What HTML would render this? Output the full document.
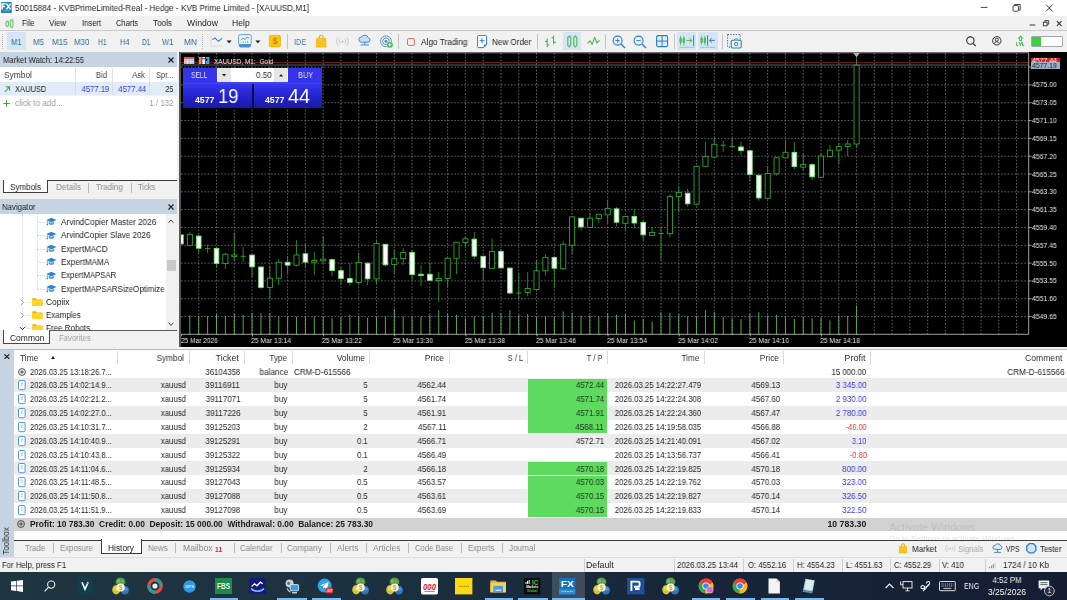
<!DOCTYPE html>
<html><head><meta charset="utf-8"><title>MetaTrader 5</title>
<style>
html,body{margin:0;padding:0;}
body{width:1067px;height:600px;overflow:hidden;position:relative;background:#f0f0f0;font-family:"Liberation Sans",sans-serif;}
body>div,body>span,body>svg{position:absolute;}
.t{position:absolute;white-space:pre;display:block;will-change:transform;line-height:14px;height:14px;font-family:"Liberation Sans",sans-serif;}
svg{overflow:visible;}
</style></head><body>
<div style="left:0.00px;top:0.00px;width:1067.00px;height:16.00px;background:#ffffff;"></div>
<svg style="left:1.30px;top:2.10px;" width="10.7" height="10.7" viewBox="0 0 10.7 10.7"><rect x="0" y="0" width="10.7" height="10.7" rx="0.8" fill="#1f8ac6"/><rect x="0" y="8.6" width="10.7" height="2.1" fill="#1a74ab"/><path d="M1.2 7.4v-5.6h3.4M1.2 4.5h2.8" stroke="#fff" stroke-width="1.5" fill="none"/><path d="M5.4 1.6l4.2 5.8M9.6 1.6l-4.2 5.8" stroke="#fff" stroke-width="1.5" fill="none"/><path d="M1.6 8.9h7.6" stroke="#9fd3f0" stroke-width="0.6"/></svg>
<span class="t" style="top:1.30px;font-size:8.4px;color:#222;left:15.30px;transform-origin:0 50%;transform:scaleX(0.9762);">50015884 - KVBPrimeLimited-Real - Hedge - KVB Prime Limited - [XAUUSD,M1]</span>
<svg style="left:975.00px;top:0.00px;" width="92" height="16" viewBox="0 0 92 16"><path d="M5.7 7.4h6.8" stroke="#333" stroke-width="0.9"/><rect x="38" y="5.6" width="5.6" height="5.6" rx="0.8" fill="none" stroke="#333" stroke-width="0.9"/><path d="M39.6 5.6v-1.1h5.6v5.6h-1.4" fill="none" stroke="#333" stroke-width="0.9"/><path d="M71 4.7l6.6 6.6M77.6 4.7l-6.6 6.6" stroke="#333" stroke-width="0.9"/></svg>
<div style="left:0.00px;top:16.00px;width:1067.00px;height:14.40px;background:#f1f1f1;"></div>
<div style="left:0.00px;top:30.20px;width:1067.00px;height:0.80px;background:#c9c9c9;"></div>
<svg style="left:4.50px;top:18.60px;" width="10" height="9.5" viewBox="0 0 10 9.5"><rect x="1" y="2.4" width="2.6" height="4.8" rx="0.5" fill="#d2f2d2" stroke="#55b555" stroke-width="0.85"/><path d="M2.3 1.6v0.8M2.3 7.2v0.9" stroke="#55b555" stroke-width="0.8"/><rect x="5.2" y="1" width="2.8" height="7.2" rx="0.5" fill="#d2f2d2" stroke="#55b555" stroke-width="0.85"/><path d="M6.6 0.2v0.8M6.6 8.2v0.9" stroke="#55b555" stroke-width="0.8"/></svg>
<span class="t" style="top:16.00px;font-size:8.4px;color:#222;left:21.60px;transform-origin:0 50%;transform:scaleX(0.9333);">File</span>
<span class="t" style="top:16.00px;font-size:8.4px;color:#222;left:49.20px;transform-origin:0 50%;transform:scaleX(0.9492);">View</span>
<span class="t" style="top:16.00px;font-size:8.4px;color:#222;left:81.50px;transform-origin:0 50%;transform:scaleX(0.9163);">Insert</span>
<span class="t" style="top:16.00px;font-size:8.4px;color:#222;left:115.90px;transform-origin:0 50%;transform:scaleX(0.8958);">Charts</span>
<span class="t" style="top:16.00px;font-size:8.4px;color:#222;left:153.00px;transform-origin:0 50%;transform:scaleX(0.9712);">Tools</span>
<span class="t" style="top:16.00px;font-size:8.4px;color:#222;left:187.00px;transform-origin:0 50%;transform:scaleX(1.0404);">Window</span>
<span class="t" style="top:16.00px;font-size:8.4px;color:#222;left:231.80px;transform-origin:0 50%;transform:scaleX(1.0270);">Help</span>
<svg style="left:1026.00px;top:16.00px;" width="41" height="14" viewBox="0 0 41 14"><path d="M3.7 9h5.6" stroke="#333" stroke-width="1"/><rect x="17.3" y="6.2" width="3.8" height="3.6" fill="none" stroke="#333" stroke-width="0.9"/><path d="M18.8 6.2v-1.6h3.9v3.6h-1.6" fill="none" stroke="#333" stroke-width="0.9"/><path d="M30.9 5.2l4.6 4.6M35.5 5.2l-4.6 4.6" stroke="#333" stroke-width="1.1"/></svg>
<div style="left:0.00px;top:31.00px;width:1067.00px;height:20.40px;background:#f1f1f1;"></div>
<div style="left:1.60px;top:34.00px;width:0.80px;height:0.90px;background:#b5b5b5;"></div>
<div style="left:1.60px;top:36.00px;width:0.80px;height:0.90px;background:#b5b5b5;"></div>
<div style="left:1.60px;top:38.00px;width:0.80px;height:0.90px;background:#b5b5b5;"></div>
<div style="left:1.60px;top:40.00px;width:0.80px;height:0.90px;background:#b5b5b5;"></div>
<div style="left:1.60px;top:42.00px;width:0.80px;height:0.90px;background:#b5b5b5;"></div>
<div style="left:1.60px;top:44.00px;width:0.80px;height:0.90px;background:#b5b5b5;"></div>
<div style="left:1.60px;top:46.00px;width:0.80px;height:0.90px;background:#b5b5b5;"></div>
<div style="left:1.60px;top:48.00px;width:0.80px;height:0.90px;background:#b5b5b5;"></div>
<div style="left:202.00px;top:34.00px;width:0.80px;height:0.90px;background:#b5b5b5;"></div>
<div style="left:202.00px;top:36.00px;width:0.80px;height:0.90px;background:#b5b5b5;"></div>
<div style="left:202.00px;top:38.00px;width:0.80px;height:0.90px;background:#b5b5b5;"></div>
<div style="left:202.00px;top:40.00px;width:0.80px;height:0.90px;background:#b5b5b5;"></div>
<div style="left:202.00px;top:42.00px;width:0.80px;height:0.90px;background:#b5b5b5;"></div>
<div style="left:202.00px;top:44.00px;width:0.80px;height:0.90px;background:#b5b5b5;"></div>
<div style="left:202.00px;top:46.00px;width:0.80px;height:0.90px;background:#b5b5b5;"></div>
<div style="left:202.00px;top:48.00px;width:0.80px;height:0.90px;background:#b5b5b5;"></div>
<div style="left:7.00px;top:31.80px;width:18.60px;height:18.60px;background:#d5e5f4;"></div>
<span class="t" style="top:34.90px;font-size:8.4px;color:#2f6f9f;left:11.00px;transform-origin:0 50%;transform:scaleX(0.9106);">M1</span>
<span class="t" style="top:34.90px;font-size:8.4px;color:#2f6f9f;left:32.50px;transform-origin:0 50%;transform:scaleX(0.9450);">M5</span>
<span class="t" style="top:34.90px;font-size:8.4px;color:#2f6f9f;left:52.00px;transform-origin:0 50%;transform:scaleX(0.9511);">M15</span>
<span class="t" style="top:34.90px;font-size:8.4px;color:#2f6f9f;left:73.70px;transform-origin:0 50%;transform:scaleX(0.9388);">M30</span>
<span class="t" style="top:34.90px;font-size:8.4px;color:#2f6f9f;left:98.30px;transform-origin:0 50%;transform:scaleX(0.8117);">H1</span>
<span class="t" style="top:34.90px;font-size:8.4px;color:#2f6f9f;left:120.00px;transform-origin:0 50%;transform:scaleX(0.8863);">H4</span>
<span class="t" style="top:34.90px;font-size:8.4px;color:#2f6f9f;left:141.60px;transform-origin:0 50%;transform:scaleX(0.7837);">D1</span>
<span class="t" style="top:34.90px;font-size:8.4px;color:#2f6f9f;left:161.90px;transform-origin:0 50%;transform:scaleX(0.8995);">W1</span>
<span class="t" style="top:34.90px;font-size:8.4px;color:#2f6f9f;left:183.50px;transform-origin:0 50%;transform:scaleX(0.9746);">MN</span>
<div style="left:287.10px;top:33.50px;width:0.90px;height:15.50px;background:#c4c4c4;"></div>
<div style="left:398.20px;top:33.50px;width:0.90px;height:15.50px;background:#c4c4c4;"></div>
<div style="left:537.40px;top:33.50px;width:0.90px;height:15.50px;background:#c4c4c4;"></div>
<div style="left:604.80px;top:33.50px;width:0.90px;height:15.50px;background:#c4c4c4;"></div>
<div style="left:673.60px;top:33.50px;width:0.90px;height:15.50px;background:#c4c4c4;"></div>
<div style="left:721.80px;top:33.50px;width:0.90px;height:15.50px;background:#c4c4c4;"></div>
<svg style="left:210.00px;top:34.00px;" width="24" height="15" viewBox="0 0 24 15"><path d="M1 1.4v10.8h11.4" fill="none" stroke="#e2d2d2" stroke-width="0.8"/><path d="M2.4 5.6l2.6-1.6 3.4 3.4 3.8-3" fill="none" stroke="#2d7dc0" stroke-width="1.05"/><path d="M16.6 6.4h5l-2.5 2.9z" fill="#1a1a1a"/></svg>
<svg style="left:238.20px;top:34.00px;" width="24" height="16" viewBox="0 0 24 16"><rect x="0.6" y="0.6" width="12.6" height="10.6" rx="1.8" fill="#eef5fb" stroke="#6aa2d4" stroke-width="1"/><path d="M0.9 10h12v1.6a2 2 0 0 1-2 2h-8a2 2 0 0 1-2-2z" fill="#4a90cc"/><path d="M2.6 6l2.2-1.8 2 1.2 2.2-2.2 2.2 0.9" fill="none" stroke="#3b86c4" stroke-width="0.9"/><path d="M3 9v-1.1M5.2 9v-1.8M7.4 9v-1.3M9.6 9v-2.2" stroke="#6fbf6f" stroke-width="0.9"/><path d="M17.4 6.4h5l-2.5 2.9z" fill="#1a1a1a"/></svg>
<svg style="left:268.50px;top:35.00px;" width="12" height="12.4" viewBox="0 0 12 12.4"><rect x="0.3" y="0.3" width="11.2" height="11.6" rx="1.6" fill="#fbc515" stroke="#e5a800" stroke-width="0.6"/><text x="5.9" y="9.3" font-size="9" text-anchor="middle" fill="#c28608" font-family="Liberation Sans" font-weight="bold">$</text></svg>
<span class="t" style="top:34.60px;font-size:8.4px;color:#3b7cb2;left:293.60px;transform-origin:0 50%;transform:scaleX(0.8734);">IDE</span>
<svg style="left:315.80px;top:33.90px;" width="10.5" height="14" viewBox="0 0 10.5 14"><path d="M3.2 4.2v-1.2a2 2 0 0 1 4 0v1.2" fill="none" stroke="#e0a200" stroke-width="1"/><path d="M0.6 4.2h9.2l0.4 8.9h-10z" fill="#fbc21a" stroke="#e5a800" stroke-width="0.5"/></svg>
<svg style="left:336.30px;top:35.90px;" width="13" height="11" viewBox="0 0 13 11"><circle cx="6.5" cy="5.5" r="1.1" fill="#bdbdbd"/><path d="M4.3 3.2a3.2 3.2 0 0 0 0 4.6M8.7 3.2a3.2 3.2 0 0 1 0 4.6M2.4 1.4a5.8 5.8 0 0 0 0 8.2M10.6 1.4a5.8 5.8 0 0 1 0 8.2" fill="none" stroke="#c4c4c4" stroke-width="0.9"/></svg>
<svg style="left:357.80px;top:35.20px;" width="14" height="12" viewBox="0 0 14 12"><path d="M3.4 7.2a2.6 2.6 0 0 1 0.2-5.2a3.6 3.6 0 0 1 6.6 0.7a2.3 2.3 0 0 1-0.1 4.5z" fill="#c6e0f6" stroke="#3b86c4" stroke-width="0.95"/><path d="M6.7 7.4v2.2M2.6 9.9h8.4" stroke="#3b86c4" stroke-width="0.95"/></svg>
<svg style="left:379.80px;top:35.00px;" width="14" height="14" viewBox="0 0 14 14"><circle cx="6" cy="6.3" r="5.4" fill="none" stroke="#4d8fc4" stroke-width="0.9"/><circle cx="6" cy="6.3" r="3.4" fill="none" stroke="#4d8fc4" stroke-width="0.9"/><circle cx="6" cy="6.3" r="1.5" fill="#4d8fc4"/><circle cx="9.8" cy="9.8" r="3.3" fill="#35b04a" stroke="#f1f1f1" stroke-width="0.6"/><path d="M8 9.8h3.6M9.8 8v3.6" stroke="#fff" stroke-width="0.9"/></svg>
<svg style="left:407.00px;top:37.70px;" width="9" height="9" viewBox="0 0 9 9"><rect x="0.5" y="0.5" width="6.9" height="6.9" rx="1.3" fill="#fdeeee" stroke="#e06a6a" stroke-width="1"/></svg>
<span class="t" style="top:34.90px;font-size:8.4px;color:#222;left:420.50px;transform-origin:0 50%;transform:scaleX(0.9887);">Algo Trading</span>
<svg style="left:477.20px;top:35.00px;" width="11" height="13.5" viewBox="0 0 11 13.5"><path d="M1.6 0.6h7a1 1 0 0 1 1 1v8l-2.8 3h-5.2a1 1 0 0 1-1-1v-10a1 1 0 0 1 1-1z" fill="#fff" stroke="#2f7fc2" stroke-width="1"/><path d="M5 3.2v5M2.6 5.7h4.8" stroke="#2f7fc2" stroke-width="1"/><path d="M9.6 9.6l-2.8 3v-3z" fill="#2f7fc2"/></svg>
<span class="t" style="top:34.90px;font-size:8.4px;color:#222;left:492.30px;transform-origin:0 50%;transform:scaleX(0.9679);">New Order</span>
<svg style="left:544.00px;top:35.00px;" width="13" height="13" viewBox="0 0 13 13"><path d="M3.2 3.2v9M1 6.4h2.2M3.2 10h2.2" fill="none" stroke="#48b757" stroke-width="1.1"/><path d="M9.6 0.6v8.6M7.6 2.6h2M9.6 7.4h2.2" fill="none" stroke="#48b757" stroke-width="1.1"/></svg>
<div style="left:562.70px;top:31.80px;width:18.70px;height:18.60px;background:#d5e5f4;"></div>
<svg style="left:566.60px;top:35.00px;" width="11" height="13" viewBox="0 0 11 13"><rect x="0.8" y="1.6" width="3" height="9.6" rx="1.2" fill="none" stroke="#48b757" stroke-width="1.1"/><rect x="6.8" y="1.6" width="3" height="9.6" rx="1.2" fill="none" stroke="#48b757" stroke-width="1.1"/><path d="M2.3 0.4v1.2M2.3 11.2v1.4M8.3 0.4v1.2M8.3 11.2v1.4" stroke="#48b757" stroke-width="1"/></svg>
<svg style="left:587.40px;top:36.00px;" width="13" height="11" viewBox="0 0 13 11"><path d="M0.5 7.2l2.6-2.4 2 3.6 2.6-7 2.2 5.6 2.6-2.6" fill="none" stroke="#48b757" stroke-width="1.15" stroke-linejoin="round"/></svg>
<svg style="left:611.50px;top:34.50px;" width="14" height="14" viewBox="0 0 14 14"><circle cx="5.6" cy="5.6" r="4.5" fill="#eaf3fb" stroke="#2f7fc2" stroke-width="1.1"/><path d="M9 9l4 4" stroke="#2f7fc2" stroke-width="1.4"/><path d="M3.4 5.6h4.4M5.6 3.4v4.4" stroke="#2f7fc2" stroke-width="1"/></svg>
<svg style="left:633.00px;top:34.50px;" width="14" height="14" viewBox="0 0 14 14"><circle cx="5.6" cy="5.6" r="4.5" fill="#eaf3fb" stroke="#2f7fc2" stroke-width="1.1"/><path d="M9 9l4 4" stroke="#2f7fc2" stroke-width="1.4"/><path d="M3.4 5.6h4.4" stroke="#2f7fc2" stroke-width="1"/></svg>
<svg style="left:655.80px;top:35.30px;" width="12.4" height="12.4" viewBox="0 0 12.4 12.4"><rect x="0.6" y="0.6" width="11" height="11" rx="1.4" fill="#dcecf9" stroke="#2f7fc2" stroke-width="1.1"/><path d="M6.1 0.6v11M0.6 6.1h11" stroke="#2f7fc2" stroke-width="1"/></svg>
<div style="left:676.50px;top:31.80px;width:19.50px;height:18.60px;background:#d5e5f4;"></div>
<svg style="left:678.50px;top:35.20px;" width="16" height="13" viewBox="0 0 16 13"><rect x="0.5" y="2.8" width="2.2" height="5.2" rx="0.9" fill="#48b757"/><path d="M1.6 0.8v9.4" stroke="#48b757" stroke-width="0.8"/><rect x="3.7" y="2.8" width="2.2" height="5.2" rx="0.9" fill="#48b757"/><path d="M4.8 0.8v9.4" stroke="#48b757" stroke-width="0.8"/><path d="M7.4 5.4h5.4M10.6 3.2l2.3 2.2-2.3 2.2" fill="none" stroke="#48b757" stroke-width="1"/><path d="M14.6 0.4v10.4" stroke="#2f7fc2" stroke-width="1"/><path d="M0.4 12.3h14.8" stroke="#8db4d6" stroke-width="0.8"/></svg>
<div style="left:698.30px;top:31.80px;width:19.50px;height:18.60px;background:#d5e5f4;"></div>
<svg style="left:700.30px;top:35.20px;" width="16" height="13" viewBox="0 0 16 13"><rect x="0.5" y="2.8" width="2.2" height="5.2" rx="0.9" fill="#48b757"/><path d="M1.6 0.8v9.4" stroke="#48b757" stroke-width="0.8"/><rect x="3.7" y="2.8" width="2.2" height="5.2" rx="0.9" fill="#48b757"/><path d="M4.8 0.8v9.4" stroke="#48b757" stroke-width="0.8"/><path d="M7.6 0.4v10.4" stroke="#2f7fc2" stroke-width="1"/><path d="M9.6 5.4h5.2M11.8 3.2l-2.3 2.2 2.3 2.2" fill="none" stroke="#2f7fc2" stroke-width="1"/><path d="M0.4 12.3h14.8" stroke="#8db4d6" stroke-width="0.8"/></svg>
<svg style="left:726.60px;top:34.30px;" width="14.5" height="14.5" viewBox="0 0 14.5 14.5"><rect x="0.6" y="0.6" width="12.6" height="12.4" fill="none" stroke="#3a6f9f" stroke-width="1" stroke-dasharray="1.4 1.3"/><rect x="4.2" y="6.2" width="10" height="7.8" rx="1.2" fill="#f1f1f1" stroke="#2f7fc2" stroke-width="1.1"/><path d="M7.2 6.2l0.8-1.3h2.4l0.8 1.3" fill="#f1f1f1" stroke="#2f7fc2" stroke-width="0.9"/><circle cx="9.2" cy="10.1" r="1.7" fill="none" stroke="#2f7fc2" stroke-width="1"/></svg>
<svg style="left:966.00px;top:36.00px;" width="11" height="11" viewBox="0 0 11 11"><circle cx="4.4" cy="4.6" r="3.7" fill="none" stroke="#333" stroke-width="1.1"/><path d="M7.1 7.4l2.6 2.7" stroke="#333" stroke-width="1.3"/></svg>
<svg style="left:991.50px;top:36.00px;" width="10" height="10" viewBox="0 0 10 10"><circle cx="4.8" cy="4.8" r="4.2" fill="none" stroke="#333" stroke-width="1"/><circle cx="4.8" cy="3.7" r="1.5" fill="none" stroke="#333" stroke-width="0.9"/><path d="M2.1 7.8a2.8 2.8 0 0 1 5.4 0" fill="none" stroke="#333" stroke-width="0.9"/></svg>
<svg style="left:1016.00px;top:35.00px;" width="10" height="12" viewBox="0 0 10 12"><path d="M4.6 0.4l3 3.2h-1.7v2.6h-2.6v-2.6h-1.7z" fill="#3cb34a"/><path d="M4.6 1.8l1.2 1.4h-0.7v2h-1v-2h-0.7z" fill="#d9f3dc"/></svg>
<svg style="left:1016.40px;top:42.20px;" width="9" height="4.2" viewBox="0 0 9 4.2"><path d="M0.6 0.2v3.4h1.7M3.2 0.2l1.2 3.4 1.2-3.4M6.5 0.2v3.4h1.7" fill="none" stroke="#3cb34a" stroke-width="0.95"/></svg>
<div style="left:1031.00px;top:36.20px;width:31.80px;height:10.40px;background:#ffffff;border:0.9px solid #a8a8a8;box-sizing:border-box;border-radius:1px;"></div>
<div style="left:1032.00px;top:37.30px;width:9.00px;height:8.30px;background:#3fcf45;"></div>
<div style="left:0.00px;top:51.40px;width:180.00px;height:296.00px;background:#f1f1f1;"></div>
<div style="left:0.00px;top:51.80px;width:176.80px;height:14.80px;background:#c6d3e3;"></div>
<span class="t" style="top:52.60px;font-size:8.4px;color:#222;left:2.60px;transform-origin:0 50%;transform:scaleX(0.9141);">Market Watch: 14:22:55</span>
<svg style="left:168.00px;top:56.60px;" width="6" height="6" viewBox="0 0 6 6"><path d="M0.5 0.5l5 5M5.5 0.5l-5 5" stroke="#222" stroke-width="1.2"/></svg>
<div style="left:0.00px;top:66.60px;width:176.80px;height:114.00px;background:#ffffff;"></div>
<span class="t" style="top:67.90px;font-size:8.4px;color:#444;left:4.30px;transform-origin:0 50%;transform:scaleX(0.9915);">Symbol</span>
<span class="t" style="top:67.90px;font-size:8.4px;color:#444;right:959.80px;transform-origin:100% 50%;transform:scaleX(0.9332);">Bid</span>
<span class="t" style="top:67.90px;font-size:8.4px;color:#444;right:922.20px;transform-origin:100% 50%;transform:scaleX(0.9020);">Ask</span>
<span class="t" style="top:67.90px;font-size:8.4px;color:#444;left:155.70px;transform-origin:0 50%;transform:scaleX(0.8843);">Spr...</span>
<div style="left:74.50px;top:67.50px;width:0.90px;height:28.00px;background:#e3e3e3;"></div>
<div style="left:111.70px;top:67.50px;width:0.90px;height:28.00px;background:#e3e3e3;"></div>
<div style="left:149.10px;top:67.50px;width:0.90px;height:28.00px;background:#e3e3e3;"></div>
<div style="left:0.00px;top:82.10px;width:176.80px;height:13.30px;background:#e1ecf8;"></div>
<div style="left:0.00px;top:95.30px;width:176.80px;height:0.80px;background:#ecf2f8;"></div>
<div style="left:74.50px;top:82.10px;width:0.90px;height:13.30px;background:#d3deea;"></div>
<div style="left:111.70px;top:82.10px;width:0.90px;height:13.30px;background:#d3deea;"></div>
<div style="left:149.10px;top:82.10px;width:0.90px;height:13.30px;background:#d3deea;"></div>
<svg style="left:3.60px;top:85.60px;" width="6.4" height="6.4" viewBox="0 0 6.4 6.4"><path d="M0.8 5.8l4.6-4.6M1.8 0.9h3.8v3.8" fill="none" stroke="#3aae4a" stroke-width="1.1"/></svg>
<span class="t" style="top:81.80px;font-size:8.4px;color:#222;left:15.20px;transform-origin:0 50%;transform:scaleX(0.8996);">XAUUSD</span>
<span class="t" style="top:81.80px;font-size:8.4px;color:#3b3bd0;right:957.90px;transform-origin:100% 50%;transform:scaleX(0.9148);">4577.19</span>
<span class="t" style="top:81.80px;font-size:8.4px;color:#3b3bd0;right:920.40px;transform-origin:100% 50%;transform:scaleX(0.9247);">4577.44</span>
<span class="t" style="top:81.80px;font-size:8.4px;color:#222;right:893.20px;transform-origin:100% 50%;transform:scaleX(0.8469);">25</span>
<svg style="left:3.10px;top:99.60px;" width="7" height="7" viewBox="0 0 7 7"><path d="M3.5 0.2v6.6M0.2 3.5h6.6" stroke="#3aae4a" stroke-width="1"/></svg>
<span class="t" style="top:96.10px;font-size:8.4px;color:#9a9a9a;left:15.20px;transform-origin:0 50%;transform:scaleX(0.9777);">click to add...</span>
<span class="t" style="top:96.10px;font-size:8.4px;color:#9a9a9a;right:892.90px;transform-origin:100% 50%;transform:scaleX(0.9522);">1 / 132</span>
<div style="left:0.00px;top:180.20px;width:176.80px;height:18.60px;background:#f1f1f1;"></div>
<div style="left:48.30px;top:180.00px;width:128.50px;height:0.90px;background:#3c3c3c;"></div>
<div style="left:3.10px;top:179.50px;width:45.20px;height:13.80px;background:#ffffff;border:0.9px solid #3c3c3c;border-top:none;box-sizing:border-box;"></div>
<span class="t" style="top:180.00px;font-size:8.4px;color:#222;left:10.00px;transform-origin:0 50%;transform:scaleX(0.9650);">Symbols</span>
<span class="t" style="top:180.00px;font-size:8.4px;color:#8c8c8c;left:56.00px;transform-origin:0 50%;transform:scaleX(0.9762);">Details</span>
<span class="t" style="top:180.00px;font-size:8.4px;color:#8c8c8c;left:96.20px;transform-origin:0 50%;transform:scaleX(0.9504);">Trading</span>
<span class="t" style="top:180.00px;font-size:8.4px;color:#8c8c8c;left:138.40px;transform-origin:0 50%;transform:scaleX(0.8994);">Ticks</span>
<div style="left:88.40px;top:182.60px;width:0.90px;height:10.20px;background:#b9b9b9;"></div>
<div style="left:131.00px;top:182.60px;width:0.90px;height:10.20px;background:#b9b9b9;"></div>
<div style="left:0.00px;top:199.00px;width:176.80px;height:14.80px;background:#c6d3e3;"></div>
<span class="t" style="top:199.80px;font-size:8.4px;color:#222;left:2.00px;transform-origin:0 50%;transform:scaleX(0.9290);">Navigator</span>
<svg style="left:168.00px;top:203.80px;" width="6" height="6" viewBox="0 0 6 6"><path d="M0.5 0.5l5 5M5.5 0.5l-5 5" stroke="#222" stroke-width="1.2"/></svg>
<div style="left:0.00px;top:213.80px;width:176.80px;height:116.40px;background:#ffffff;"></div>
<div style="left:22.3px;top:214px;width:0;height:114px;border-left:0.9px dotted #d6d6d6;"></div>
<div style="left:36.6px;top:214px;width:0;height:75px;border-left:0.9px dotted #d6d6d6;"></div>
<div style="left:37px;top:221.9px;width:8px;height:0;border-top:0.9px dotted #d6d6d6;"></div>
<svg style="left:45.60px;top:217.30px;" width="11" height="9" viewBox="0 0 11 9"><path d="M0.4 3.1l5-2.3 5 2.3-5 2.3z" fill="#2f86c8"/><path d="M2.6 4.6v2.5c1.6 1.2 4 1.2 5.6 0v-2.5l-2.8 1.3z" fill="#5aa5dc"/><path d="M1.3 3.6v3.6" stroke="#2f86c8" stroke-width="0.7"/><circle cx="1.3" cy="7.6" r="0.8" fill="#2f86c8"/></svg>
<span class="t" style="top:214.90px;font-size:8.4px;color:#222;left:60.80px;transform-origin:0 50%;transform:scaleX(0.9795);">ArvindCopier Master 2026</span>
<div style="left:37px;top:235.3px;width:8px;height:0;border-top:0.9px dotted #d6d6d6;"></div>
<svg style="left:45.60px;top:230.70px;" width="11" height="9" viewBox="0 0 11 9"><path d="M0.4 3.1l5-2.3 5 2.3-5 2.3z" fill="#2f86c8"/><path d="M2.6 4.6v2.5c1.6 1.2 4 1.2 5.6 0v-2.5l-2.8 1.3z" fill="#5aa5dc"/><path d="M1.3 3.6v3.6" stroke="#2f86c8" stroke-width="0.7"/><circle cx="1.3" cy="7.6" r="0.8" fill="#2f86c8"/></svg>
<span class="t" style="top:228.30px;font-size:8.4px;color:#222;left:60.80px;transform-origin:0 50%;transform:scaleX(0.9659);">ArvindCopier Slave 2026</span>
<div style="left:37px;top:248.8px;width:8px;height:0;border-top:0.9px dotted #d6d6d6;"></div>
<svg style="left:45.60px;top:244.20px;" width="11" height="9" viewBox="0 0 11 9"><path d="M0.4 3.1l5-2.3 5 2.3-5 2.3z" fill="#2f86c8"/><path d="M2.6 4.6v2.5c1.6 1.2 4 1.2 5.6 0v-2.5l-2.8 1.3z" fill="#5aa5dc"/><path d="M1.3 3.6v3.6" stroke="#2f86c8" stroke-width="0.7"/><circle cx="1.3" cy="7.6" r="0.8" fill="#2f86c8"/></svg>
<span class="t" style="top:241.80px;font-size:8.4px;color:#222;left:60.80px;transform-origin:0 50%;transform:scaleX(0.9535);">ExpertMACD</span>
<div style="left:37px;top:262.0px;width:8px;height:0;border-top:0.9px dotted #d6d6d6;"></div>
<svg style="left:45.60px;top:257.40px;" width="11" height="9" viewBox="0 0 11 9"><path d="M0.4 3.1l5-2.3 5 2.3-5 2.3z" fill="#2f86c8"/><path d="M2.6 4.6v2.5c1.6 1.2 4 1.2 5.6 0v-2.5l-2.8 1.3z" fill="#5aa5dc"/><path d="M1.3 3.6v3.6" stroke="#2f86c8" stroke-width="0.7"/><circle cx="1.3" cy="7.6" r="0.8" fill="#2f86c8"/></svg>
<span class="t" style="top:255.00px;font-size:8.4px;color:#222;left:60.80px;transform-origin:0 50%;transform:scaleX(0.9809);">ExpertMAMA</span>
<div style="left:37px;top:275.2px;width:8px;height:0;border-top:0.9px dotted #d6d6d6;"></div>
<svg style="left:45.60px;top:270.60px;" width="11" height="9" viewBox="0 0 11 9"><path d="M0.4 3.1l5-2.3 5 2.3-5 2.3z" fill="#2f86c8"/><path d="M2.6 4.6v2.5c1.6 1.2 4 1.2 5.6 0v-2.5l-2.8 1.3z" fill="#5aa5dc"/><path d="M1.3 3.6v3.6" stroke="#2f86c8" stroke-width="0.7"/><circle cx="1.3" cy="7.6" r="0.8" fill="#2f86c8"/></svg>
<span class="t" style="top:268.20px;font-size:8.4px;color:#222;left:60.80px;transform-origin:0 50%;transform:scaleX(0.9265);">ExpertMAPSAR</span>
<div style="left:37px;top:288.6px;width:8px;height:0;border-top:0.9px dotted #d6d6d6;"></div>
<svg style="left:45.60px;top:284.00px;" width="11" height="9" viewBox="0 0 11 9"><path d="M0.4 3.1l5-2.3 5 2.3-5 2.3z" fill="#2f86c8"/><path d="M2.6 4.6v2.5c1.6 1.2 4 1.2 5.6 0v-2.5l-2.8 1.3z" fill="#5aa5dc"/><path d="M1.3 3.6v3.6" stroke="#2f86c8" stroke-width="0.7"/><circle cx="1.3" cy="7.6" r="0.8" fill="#2f86c8"/></svg>
<span class="t" style="top:281.60px;font-size:8.4px;color:#222;left:60.80px;transform-origin:0 50%;transform:scaleX(0.9511);">ExpertMAPSARSizeOptimize</span>
<svg style="left:20.40px;top:298.50px;" width="5" height="7" viewBox="0 0 5 7"><path d="M0.8 0.6l2.8 2.8-2.8 2.8" fill="none" stroke="#999" stroke-width="0.9"/></svg>
<div style="left:27px;top:301.9px;width:4px;height:0;border-top:0.9px dotted #d6d6d6;"></div>
<svg style="left:31.50px;top:296.90px;" width="11" height="9.5" viewBox="0 0 11 9.5"><path d="M0.3 1.2h3.6l1 1.2h5.6v6.6h-10.2z" fill="#e8b500"/><path d="M0.3 3h10.2v6h-10.2z" fill="#ffd426"/></svg>
<span class="t" style="top:294.90px;font-size:8.4px;color:#222;left:46.20px;transform-origin:0 50%;transform:scaleX(1.0051);">Copiix</span>
<svg style="left:20.40px;top:311.70px;" width="5" height="7" viewBox="0 0 5 7"><path d="M0.8 0.6l2.8 2.8-2.8 2.8" fill="none" stroke="#999" stroke-width="0.9"/></svg>
<div style="left:27px;top:315.1px;width:4px;height:0;border-top:0.9px dotted #d6d6d6;"></div>
<svg style="left:31.50px;top:310.10px;" width="11" height="9.5" viewBox="0 0 11 9.5"><path d="M0.3 1.2h3.6l1 1.2h5.6v6.6h-10.2z" fill="#e8b500"/><path d="M0.3 3h10.2v6h-10.2z" fill="#ffd426"/></svg>
<span class="t" style="top:308.10px;font-size:8.4px;color:#222;left:46.20px;transform-origin:0 50%;transform:scaleX(0.9461);">Examples</span>
<svg style="left:19.00px;top:325.70px;" width="7" height="5" viewBox="0 0 7 5"><path d="M0.6 0.8l2.8 2.8 2.8-2.8" fill="none" stroke="#444" stroke-width="1"/></svg>
<div style="left:27px;top:328.2px;width:4px;height:0;border-top:0.9px dotted #d6d6d6;"></div>
<svg style="left:31.50px;top:323.20px;" width="11" height="9.5" viewBox="0 0 11 9.5"><path d="M0.3 1.2h3.6l1 1.2h5.6v6.6h-10.2z" fill="#e8b500"/><path d="M0.3 3h10.2v6h-10.2z" fill="#ffd426"/></svg>
<span class="t" style="top:321.20px;font-size:8.4px;color:#222;left:46.20px;transform-origin:0 50%;transform:scaleX(0.9589);">Free Robots</span>
<div style="left:165.60px;top:213.80px;width:11.20px;height:116.40px;background:#f1f1f1;"></div>
<svg style="left:168.40px;top:218.60px;" width="6" height="4.5" viewBox="0 0 6 4.5"><path d="M0.5 3.8l2.5-2.8 2.5 2.8" fill="none" stroke="#444" stroke-width="1"/></svg>
<svg style="left:168.40px;top:322.20px;" width="6" height="4.5" viewBox="0 0 6 4.5"><path d="M0.5 0.6l2.5 2.8 2.5-2.8" fill="none" stroke="#444" stroke-width="1"/></svg>
<div style="left:166.60px;top:259.80px;width:9.40px;height:11.70px;background:#c9c9c9;"></div>
<div style="left:0.00px;top:330.20px;width:176.80px;height:17.50px;background:#f1f1f1;"></div>
<div style="left:50.40px;top:330.00px;width:126.40px;height:0.90px;background:#5a5a5a;"></div>
<div style="left:3.30px;top:329.60px;width:47.10px;height:14.60px;background:#ffffff;border:0.9px solid #4a4a4a;border-top:none;box-sizing:border-box;"></div>
<span class="t" style="top:330.60px;font-size:8.4px;color:#222;left:10.20px;transform-origin:0 50%;transform:scaleX(1.0122);">Common</span>
<span class="t" style="top:330.60px;font-size:8.4px;color:#a0a0a0;left:58.60px;transform-origin:0 50%;transform:scaleX(0.9201);">Favorites</span>
<div style="left:176.80px;top:51.40px;width:3.40px;height:296.00px;background:#f1f1f1;"></div>
<div style="left:179.00px;top:51.60px;width:888.00px;height:295.20px;background:#000000;"></div>
<div style="left:179.00px;top:51.60px;width:850.30px;height:2.30px;background:linear-gradient(#8c8c8c 0%,#555 45%,#000 100%);"></div>
<div style="left:179.00px;top:51.60px;width:1.90px;height:295.20px;background:#565656;"></div>
<div style="left:0.00px;top:346.80px;width:1067.00px;height:2.40px;background:#f0f0f0;"></div>
<div style="left:0.00px;top:349.00px;width:1067.00px;height:0.95px;background:#bcbcbc;"></div>
<svg style="left:0;top:0;" width="1067" height="600" viewBox="0 0 1067 600"><defs><clipPath id="cp"><rect x="181.0" y="52.5" width="886.0" height="293.8"/></clipPath></defs><g clip-path="url(#cp)"><path d="M198.68 53.0V334.3" stroke="#7c7f85" stroke-width="0.74" stroke-dasharray="1.75 1.583" fill="none"/><path d="M216.46 53.0V334.3" stroke="#7c7f85" stroke-width="0.74" stroke-dasharray="1.75 1.583" fill="none"/><path d="M234.24 53.0V334.3" stroke="#7c7f85" stroke-width="0.74" stroke-dasharray="1.75 1.583" fill="none"/><path d="M252.02 53.0V334.3" stroke="#7c7f85" stroke-width="0.74" stroke-dasharray="1.75 1.583" fill="none"/><path d="M269.80 53.0V334.3" stroke="#7c7f85" stroke-width="0.74" stroke-dasharray="1.75 1.583" fill="none"/><path d="M287.58 53.0V334.3" stroke="#7c7f85" stroke-width="0.74" stroke-dasharray="1.75 1.583" fill="none"/><path d="M305.36 53.0V334.3" stroke="#7c7f85" stroke-width="0.74" stroke-dasharray="1.75 1.583" fill="none"/><path d="M323.14 53.0V334.3" stroke="#7c7f85" stroke-width="0.74" stroke-dasharray="1.75 1.583" fill="none"/><path d="M340.92 53.0V334.3" stroke="#7c7f85" stroke-width="0.74" stroke-dasharray="1.75 1.583" fill="none"/><path d="M358.70 53.0V334.3" stroke="#7c7f85" stroke-width="0.74" stroke-dasharray="1.75 1.583" fill="none"/><path d="M376.48 53.0V334.3" stroke="#7c7f85" stroke-width="0.74" stroke-dasharray="1.75 1.583" fill="none"/><path d="M394.26 53.0V334.3" stroke="#7c7f85" stroke-width="0.74" stroke-dasharray="1.75 1.583" fill="none"/><path d="M412.04 53.0V334.3" stroke="#7c7f85" stroke-width="0.74" stroke-dasharray="1.75 1.583" fill="none"/><path d="M429.82 53.0V334.3" stroke="#7c7f85" stroke-width="0.74" stroke-dasharray="1.75 1.583" fill="none"/><path d="M447.60 53.0V334.3" stroke="#7c7f85" stroke-width="0.74" stroke-dasharray="1.75 1.583" fill="none"/><path d="M465.38 53.0V334.3" stroke="#7c7f85" stroke-width="0.74" stroke-dasharray="1.75 1.583" fill="none"/><path d="M483.16 53.0V334.3" stroke="#7c7f85" stroke-width="0.74" stroke-dasharray="1.75 1.583" fill="none"/><path d="M500.94 53.0V334.3" stroke="#7c7f85" stroke-width="0.74" stroke-dasharray="1.75 1.583" fill="none"/><path d="M518.72 53.0V334.3" stroke="#7c7f85" stroke-width="0.74" stroke-dasharray="1.75 1.583" fill="none"/><path d="M536.50 53.0V334.3" stroke="#7c7f85" stroke-width="0.74" stroke-dasharray="1.75 1.583" fill="none"/><path d="M554.28 53.0V334.3" stroke="#7c7f85" stroke-width="0.74" stroke-dasharray="1.75 1.583" fill="none"/><path d="M572.06 53.0V334.3" stroke="#7c7f85" stroke-width="0.74" stroke-dasharray="1.75 1.583" fill="none"/><path d="M589.84 53.0V334.3" stroke="#7c7f85" stroke-width="0.74" stroke-dasharray="1.75 1.583" fill="none"/><path d="M607.62 53.0V334.3" stroke="#7c7f85" stroke-width="0.74" stroke-dasharray="1.75 1.583" fill="none"/><path d="M625.40 53.0V334.3" stroke="#7c7f85" stroke-width="0.74" stroke-dasharray="1.75 1.583" fill="none"/><path d="M643.18 53.0V334.3" stroke="#7c7f85" stroke-width="0.74" stroke-dasharray="1.75 1.583" fill="none"/><path d="M660.96 53.0V334.3" stroke="#7c7f85" stroke-width="0.74" stroke-dasharray="1.75 1.583" fill="none"/><path d="M678.74 53.0V334.3" stroke="#7c7f85" stroke-width="0.74" stroke-dasharray="1.75 1.583" fill="none"/><path d="M696.52 53.0V334.3" stroke="#7c7f85" stroke-width="0.74" stroke-dasharray="1.75 1.583" fill="none"/><path d="M714.30 53.0V334.3" stroke="#7c7f85" stroke-width="0.74" stroke-dasharray="1.75 1.583" fill="none"/><path d="M732.08 53.0V334.3" stroke="#7c7f85" stroke-width="0.74" stroke-dasharray="1.75 1.583" fill="none"/><path d="M749.86 53.0V334.3" stroke="#7c7f85" stroke-width="0.74" stroke-dasharray="1.75 1.583" fill="none"/><path d="M767.64 53.0V334.3" stroke="#7c7f85" stroke-width="0.74" stroke-dasharray="1.75 1.583" fill="none"/><path d="M785.42 53.0V334.3" stroke="#7c7f85" stroke-width="0.74" stroke-dasharray="1.75 1.583" fill="none"/><path d="M803.20 53.0V334.3" stroke="#7c7f85" stroke-width="0.74" stroke-dasharray="1.75 1.583" fill="none"/><path d="M820.98 53.0V334.3" stroke="#7c7f85" stroke-width="0.74" stroke-dasharray="1.75 1.583" fill="none"/><path d="M838.76 53.0V334.3" stroke="#7c7f85" stroke-width="0.74" stroke-dasharray="1.75 1.583" fill="none"/><path d="M856.54 53.0V334.3" stroke="#7c7f85" stroke-width="0.74" stroke-dasharray="1.75 1.583" fill="none"/><path d="M874.32 53.0V334.3" stroke="#7c7f85" stroke-width="0.74" stroke-dasharray="1.75 1.583" fill="none"/><path d="M892.10 53.0V334.3" stroke="#7c7f85" stroke-width="0.74" stroke-dasharray="1.75 1.583" fill="none"/><path d="M909.88 53.0V334.3" stroke="#7c7f85" stroke-width="0.74" stroke-dasharray="1.75 1.583" fill="none"/><path d="M927.66 53.0V334.3" stroke="#7c7f85" stroke-width="0.74" stroke-dasharray="1.75 1.583" fill="none"/><path d="M945.44 53.0V334.3" stroke="#7c7f85" stroke-width="0.74" stroke-dasharray="1.75 1.583" fill="none"/><path d="M963.22 53.0V334.3" stroke="#7c7f85" stroke-width="0.74" stroke-dasharray="1.75 1.583" fill="none"/><path d="M981.00 53.0V334.3" stroke="#7c7f85" stroke-width="0.74" stroke-dasharray="1.75 1.583" fill="none"/><path d="M998.78 53.0V334.3" stroke="#7c7f85" stroke-width="0.74" stroke-dasharray="1.75 1.583" fill="none"/><path d="M1016.56 53.0V334.3" stroke="#7c7f85" stroke-width="0.74" stroke-dasharray="1.75 1.583" fill="none"/><path d="M181.0 67.10H1028.7" stroke="#7c7f85" stroke-width="0.74" stroke-dasharray="1.75 1.583" fill="none"/><path d="M1028.7 67.10h3" stroke="#d0d0d0" stroke-width="0.7"/><path d="M181.0 84.92H1028.7" stroke="#7c7f85" stroke-width="0.74" stroke-dasharray="1.75 1.583" fill="none"/><path d="M1028.7 84.92h3" stroke="#d0d0d0" stroke-width="0.7"/><path d="M181.0 102.74H1028.7" stroke="#7c7f85" stroke-width="0.74" stroke-dasharray="1.75 1.583" fill="none"/><path d="M1028.7 102.74h3" stroke="#d0d0d0" stroke-width="0.7"/><path d="M181.0 120.56H1028.7" stroke="#7c7f85" stroke-width="0.74" stroke-dasharray="1.75 1.583" fill="none"/><path d="M1028.7 120.56h3" stroke="#d0d0d0" stroke-width="0.7"/><path d="M181.0 138.38H1028.7" stroke="#7c7f85" stroke-width="0.74" stroke-dasharray="1.75 1.583" fill="none"/><path d="M1028.7 138.38h3" stroke="#d0d0d0" stroke-width="0.7"/><path d="M181.0 156.20H1028.7" stroke="#7c7f85" stroke-width="0.74" stroke-dasharray="1.75 1.583" fill="none"/><path d="M1028.7 156.20h3" stroke="#d0d0d0" stroke-width="0.7"/><path d="M181.0 174.02H1028.7" stroke="#7c7f85" stroke-width="0.74" stroke-dasharray="1.75 1.583" fill="none"/><path d="M1028.7 174.02h3" stroke="#d0d0d0" stroke-width="0.7"/><path d="M181.0 191.84H1028.7" stroke="#7c7f85" stroke-width="0.74" stroke-dasharray="1.75 1.583" fill="none"/><path d="M1028.7 191.84h3" stroke="#d0d0d0" stroke-width="0.7"/><path d="M181.0 209.66H1028.7" stroke="#7c7f85" stroke-width="0.74" stroke-dasharray="1.75 1.583" fill="none"/><path d="M1028.7 209.66h3" stroke="#d0d0d0" stroke-width="0.7"/><path d="M181.0 227.48H1028.7" stroke="#7c7f85" stroke-width="0.74" stroke-dasharray="1.75 1.583" fill="none"/><path d="M1028.7 227.48h3" stroke="#d0d0d0" stroke-width="0.7"/><path d="M181.0 245.30H1028.7" stroke="#7c7f85" stroke-width="0.74" stroke-dasharray="1.75 1.583" fill="none"/><path d="M1028.7 245.30h3" stroke="#d0d0d0" stroke-width="0.7"/><path d="M181.0 263.12H1028.7" stroke="#7c7f85" stroke-width="0.74" stroke-dasharray="1.75 1.583" fill="none"/><path d="M1028.7 263.12h3" stroke="#d0d0d0" stroke-width="0.7"/><path d="M181.0 280.94H1028.7" stroke="#7c7f85" stroke-width="0.74" stroke-dasharray="1.75 1.583" fill="none"/><path d="M1028.7 280.94h3" stroke="#d0d0d0" stroke-width="0.7"/><path d="M181.0 298.76H1028.7" stroke="#7c7f85" stroke-width="0.74" stroke-dasharray="1.75 1.583" fill="none"/><path d="M1028.7 298.76h3" stroke="#d0d0d0" stroke-width="0.7"/><path d="M181.0 316.58H1028.7" stroke="#7c7f85" stroke-width="0.74" stroke-dasharray="1.75 1.583" fill="none"/><path d="M1028.7 316.58h3" stroke="#d0d0d0" stroke-width="0.7"/><path d="M189.84 315.25V334.3" stroke="#5dbb58" stroke-width="0.9"/><path d="M198.73 315.76V334.3" stroke="#5dbb58" stroke-width="0.9"/><path d="M207.62 316.01V334.3" stroke="#5dbb58" stroke-width="0.9"/><path d="M216.51 313.99V334.3" stroke="#5dbb58" stroke-width="0.9"/><path d="M225.40 316.01V334.3" stroke="#5dbb58" stroke-width="0.9"/><path d="M234.29 313.99V334.3" stroke="#5dbb58" stroke-width="0.9"/><path d="M243.18 314.75V334.3" stroke="#5dbb58" stroke-width="0.9"/><path d="M252.07 312.72V334.3" stroke="#5dbb58" stroke-width="0.9"/><path d="M260.96 313.23V334.3" stroke="#5dbb58" stroke-width="0.9"/><path d="M269.85 313.23V334.3" stroke="#5dbb58" stroke-width="0.9"/><path d="M278.74 316.52V334.3" stroke="#5dbb58" stroke-width="0.9"/><path d="M287.63 316.52V334.3" stroke="#5dbb58" stroke-width="0.9"/><path d="M296.52 316.52V334.3" stroke="#5dbb58" stroke-width="0.9"/><path d="M305.41 316.52V334.3" stroke="#5dbb58" stroke-width="0.9"/><path d="M314.30 316.52V334.3" stroke="#5dbb58" stroke-width="0.9"/><path d="M323.19 316.52V334.3" stroke="#5dbb58" stroke-width="0.9"/><path d="M332.08 317.78V334.3" stroke="#5dbb58" stroke-width="0.9"/><path d="M340.97 317.28V334.3" stroke="#5dbb58" stroke-width="0.9"/><path d="M349.86 314.75V334.3" stroke="#5dbb58" stroke-width="0.9"/><path d="M358.75 315.76V334.3" stroke="#5dbb58" stroke-width="0.9"/><path d="M367.64 317.78V334.3" stroke="#5dbb58" stroke-width="0.9"/><path d="M376.53 316.52V334.3" stroke="#5dbb58" stroke-width="0.9"/><path d="M385.42 316.52V334.3" stroke="#5dbb58" stroke-width="0.9"/><path d="M394.31 308.92V334.3" stroke="#5dbb58" stroke-width="0.9"/><path d="M403.20 316.52V334.3" stroke="#5dbb58" stroke-width="0.9"/><path d="M412.09 316.52V334.3" stroke="#5dbb58" stroke-width="0.9"/><path d="M420.98 316.52V334.3" stroke="#5dbb58" stroke-width="0.9"/><path d="M429.87 314.75V334.3" stroke="#5dbb58" stroke-width="0.9"/><path d="M438.76 310.19V334.3" stroke="#5dbb58" stroke-width="0.9"/><path d="M447.65 313.99V334.3" stroke="#5dbb58" stroke-width="0.9"/><path d="M456.54 314.75V334.3" stroke="#5dbb58" stroke-width="0.9"/><path d="M465.43 318.29V334.3" stroke="#5dbb58" stroke-width="0.9"/><path d="M474.32 316.52V334.3" stroke="#5dbb58" stroke-width="0.9"/><path d="M483.21 316.01V334.3" stroke="#5dbb58" stroke-width="0.9"/><path d="M492.10 312.72V334.3" stroke="#5dbb58" stroke-width="0.9"/><path d="M500.99 313.23V334.3" stroke="#5dbb58" stroke-width="0.9"/><path d="M509.88 310.19V334.3" stroke="#5dbb58" stroke-width="0.9"/><path d="M518.77 314.75V334.3" stroke="#5dbb58" stroke-width="0.9"/><path d="M527.66 313.99V334.3" stroke="#5dbb58" stroke-width="0.9"/><path d="M536.55 316.52V334.3" stroke="#5dbb58" stroke-width="0.9"/><path d="M545.44 316.52V334.3" stroke="#5dbb58" stroke-width="0.9"/><path d="M554.33 316.52V334.3" stroke="#5dbb58" stroke-width="0.9"/><path d="M563.22 311.46V334.3" stroke="#5dbb58" stroke-width="0.9"/><path d="M572.11 312.72V334.3" stroke="#5dbb58" stroke-width="0.9"/><path d="M581.00 315.76V334.3" stroke="#5dbb58" stroke-width="0.9"/><path d="M589.89 315.25V334.3" stroke="#5dbb58" stroke-width="0.9"/><path d="M598.78 316.52V334.3" stroke="#5dbb58" stroke-width="0.9"/><path d="M607.67 313.23V334.3" stroke="#5dbb58" stroke-width="0.9"/><path d="M616.56 314.75V334.3" stroke="#5dbb58" stroke-width="0.9"/><path d="M625.45 313.99V334.3" stroke="#5dbb58" stroke-width="0.9"/><path d="M634.34 320.32V334.3" stroke="#5dbb58" stroke-width="0.9"/><path d="M643.23 319.05V334.3" stroke="#5dbb58" stroke-width="0.9"/><path d="M652.12 321.58V334.3" stroke="#5dbb58" stroke-width="0.9"/><path d="M661.01 312.22V334.3" stroke="#5dbb58" stroke-width="0.9"/><path d="M669.90 312.72V334.3" stroke="#5dbb58" stroke-width="0.9"/><path d="M678.79 313.99V334.3" stroke="#5dbb58" stroke-width="0.9"/><path d="M687.68 316.52V334.3" stroke="#5dbb58" stroke-width="0.9"/><path d="M696.57 315.76V334.3" stroke="#5dbb58" stroke-width="0.9"/><path d="M705.46 310.19V334.3" stroke="#5dbb58" stroke-width="0.9"/><path d="M714.35 312.22V334.3" stroke="#5dbb58" stroke-width="0.9"/><path d="M723.24 317.28V334.3" stroke="#5dbb58" stroke-width="0.9"/><path d="M732.13 318.29V334.3" stroke="#5dbb58" stroke-width="0.9"/><path d="M741.02 319.05V334.3" stroke="#5dbb58" stroke-width="0.9"/><path d="M749.91 313.99V334.3" stroke="#5dbb58" stroke-width="0.9"/><path d="M758.80 312.22V334.3" stroke="#5dbb58" stroke-width="0.9"/><path d="M767.69 315.25V334.3" stroke="#5dbb58" stroke-width="0.9"/><path d="M776.58 314.75V334.3" stroke="#5dbb58" stroke-width="0.9"/><path d="M785.47 316.52V334.3" stroke="#5dbb58" stroke-width="0.9"/><path d="M794.36 319.05V334.3" stroke="#5dbb58" stroke-width="0.9"/><path d="M803.25 317.28V334.3" stroke="#5dbb58" stroke-width="0.9"/><path d="M812.14 318.29V334.3" stroke="#5dbb58" stroke-width="0.9"/><path d="M821.03 317.78V334.3" stroke="#5dbb58" stroke-width="0.9"/><path d="M829.92 320.32V334.3" stroke="#5dbb58" stroke-width="0.9"/><path d="M838.81 315.25V334.3" stroke="#5dbb58" stroke-width="0.9"/><path d="M847.70 315.76V334.3" stroke="#5dbb58" stroke-width="0.9"/><path d="M856.59 305.63V334.3" stroke="#5dbb58" stroke-width="0.9"/><path d="M180.95 234.80V244.00" stroke="#2fa52f" stroke-width="0.8"/><rect x="178.65" y="234.90" width="4.6" height="9.00" fill="#ffffff" stroke="#7be07b" stroke-width="0.95"/><path d="M189.84 232.10V245.30" stroke="#2fa52f" stroke-width="0.8"/><rect x="187.29" y="234.30" width="5.1" height="11.00" fill="#000" stroke="#33ad33" stroke-width="0.85"/><path d="M198.73 235.00V252.90" stroke="#2fa52f" stroke-width="0.8"/><rect x="196.43" y="236.10" width="4.6" height="12.10" fill="#ffffff" stroke="#7be07b" stroke-width="0.95"/><path d="M207.62 244.50V252.90" stroke="#2fa52f" stroke-width="0.8"/><path d="M205.02 248.70H210.22" stroke="#33ad33" stroke-width="0.9"/><path d="M216.51 248.30V267.20" stroke="#2fa52f" stroke-width="0.8"/><rect x="214.21" y="248.40" width="4.6" height="15.00" fill="#ffffff" stroke="#7be07b" stroke-width="0.95"/><path d="M225.40 252.90V268.90" stroke="#2fa52f" stroke-width="0.8"/><rect x="222.85" y="254.20" width="5.1" height="9.30" fill="#000" stroke="#33ad33" stroke-width="0.85"/><path d="M234.29 232.60V261.30" stroke="#2fa52f" stroke-width="0.8"/><rect x="231.74" y="255.00" width="5.1" height="1.40" fill="#000" stroke="#33ad33" stroke-width="0.85"/><path d="M243.18 247.00V262.20" stroke="#2fa52f" stroke-width="0.8"/><path d="M240.58 256.30H245.78" stroke="#33ad33" stroke-width="0.9"/><path d="M252.07 255.00V277.30" stroke="#2fa52f" stroke-width="0.8"/><rect x="249.77" y="255.10" width="4.6" height="11.70" fill="#ffffff" stroke="#7be07b" stroke-width="0.95"/><path d="M260.96 266.90V289.00" stroke="#2fa52f" stroke-width="0.8"/><rect x="258.66" y="267.00" width="4.6" height="20.40" fill="#ffffff" stroke="#7be07b" stroke-width="0.95"/><path d="M269.85 265.50V299.30" stroke="#2fa52f" stroke-width="0.8"/><rect x="267.30" y="278.20" width="5.1" height="9.30" fill="#000" stroke="#33ad33" stroke-width="0.85"/><path d="M278.74 259.10V285.00" stroke="#2fa52f" stroke-width="0.8"/><rect x="276.19" y="262.20" width="5.1" height="16.00" fill="#000" stroke="#33ad33" stroke-width="0.85"/><path d="M287.63 256.30V274.00" stroke="#2fa52f" stroke-width="0.8"/><rect x="285.33" y="262.30" width="4.6" height="2.80" fill="#ffffff" stroke="#7be07b" stroke-width="0.95"/><path d="M296.52 240.20V266.40" stroke="#2fa52f" stroke-width="0.8"/><rect x="293.97" y="255.00" width="5.1" height="10.20" fill="#000" stroke="#33ad33" stroke-width="0.85"/><path d="M305.41 243.60V267.20" stroke="#2fa52f" stroke-width="0.8"/><rect x="303.11" y="253.80" width="4.6" height="8.30" fill="#ffffff" stroke="#7be07b" stroke-width="0.95"/><path d="M314.30 251.70V274.80" stroke="#2fa52f" stroke-width="0.8"/><rect x="311.75" y="260.50" width="5.1" height="1.70" fill="#000" stroke="#33ad33" stroke-width="0.85"/><path d="M323.19 236.00V263.00" stroke="#2fa52f" stroke-width="0.8"/><rect x="320.64" y="259.10" width="5.1" height="1.70" fill="#000" stroke="#33ad33" stroke-width="0.85"/><path d="M332.08 258.50V276.50" stroke="#2fa52f" stroke-width="0.8"/><rect x="329.78" y="259.70" width="4.6" height="10.80" fill="#ffffff" stroke="#7be07b" stroke-width="0.95"/><path d="M340.97 267.20V283.70" stroke="#2fa52f" stroke-width="0.8"/><rect x="338.67" y="270.70" width="4.6" height="7.70" fill="#ffffff" stroke="#7be07b" stroke-width="0.95"/><path d="M349.86 263.00V285.80" stroke="#2fa52f" stroke-width="0.8"/><rect x="347.56" y="278.60" width="4.6" height="3.70" fill="#ffffff" stroke="#7be07b" stroke-width="0.95"/><path d="M358.75 252.90V284.00" stroke="#2fa52f" stroke-width="0.8"/><rect x="356.20" y="262.50" width="5.1" height="19.90" fill="#000" stroke="#33ad33" stroke-width="0.85"/><path d="M367.64 262.00V285.20" stroke="#2fa52f" stroke-width="0.8"/><rect x="365.34" y="263.30" width="4.6" height="15.50" fill="#ffffff" stroke="#7be07b" stroke-width="0.95"/><path d="M376.53 239.60V283.80" stroke="#2fa52f" stroke-width="0.8"/><rect x="373.98" y="243.50" width="5.1" height="35.40" fill="#000" stroke="#33ad33" stroke-width="0.85"/><path d="M385.42 244.20V266.60" stroke="#2fa52f" stroke-width="0.8"/><rect x="383.12" y="244.30" width="4.6" height="20.50" fill="#ffffff" stroke="#7be07b" stroke-width="0.95"/><path d="M394.31 249.70V274.20" stroke="#2fa52f" stroke-width="0.8"/><rect x="391.76" y="258.70" width="5.1" height="5.70" fill="#000" stroke="#33ad33" stroke-width="0.85"/><path d="M403.20 248.00V264.90" stroke="#2fa52f" stroke-width="0.8"/><rect x="400.65" y="252.60" width="5.1" height="6.10" fill="#000" stroke="#33ad33" stroke-width="0.85"/><path d="M412.09 250.00V280.10" stroke="#2fa52f" stroke-width="0.8"/><rect x="409.79" y="252.40" width="4.6" height="22.20" fill="#ffffff" stroke="#7be07b" stroke-width="0.95"/><path d="M420.98 264.90V286.00" stroke="#2fa52f" stroke-width="0.8"/><rect x="418.68" y="274.30" width="4.6" height="1.10" fill="#ffffff" stroke="#7be07b" stroke-width="0.95"/><path d="M429.87 262.40V281.00" stroke="#2fa52f" stroke-width="0.8"/><rect x="427.57" y="274.30" width="4.6" height="6.00" fill="#ffffff" stroke="#7be07b" stroke-width="0.95"/><path d="M438.76 272.20V302.00" stroke="#2fa52f" stroke-width="0.8"/><rect x="436.21" y="278.40" width="5.1" height="2.20" fill="#000" stroke="#33ad33" stroke-width="0.85"/><path d="M447.65 257.50V286.80" stroke="#2fa52f" stroke-width="0.8"/><rect x="445.10" y="258.20" width="5.1" height="20.20" fill="#000" stroke="#33ad33" stroke-width="0.85"/><path d="M456.54 242.20V274.20" stroke="#2fa52f" stroke-width="0.8"/><rect x="453.99" y="242.20" width="5.1" height="16.00" fill="#000" stroke="#33ad33" stroke-width="0.85"/><path d="M465.43 236.30V246.40" stroke="#2fa52f" stroke-width="0.8"/><rect x="462.88" y="238.80" width="5.1" height="3.70" fill="#000" stroke="#33ad33" stroke-width="0.85"/><path d="M474.32 232.00V259.00" stroke="#2fa52f" stroke-width="0.8"/><rect x="472.02" y="239.20" width="4.6" height="16.90" fill="#ffffff" stroke="#7be07b" stroke-width="0.95"/><path d="M483.21 256.20V280.10" stroke="#2fa52f" stroke-width="0.8"/><rect x="480.91" y="256.30" width="4.6" height="11.40" fill="#ffffff" stroke="#7be07b" stroke-width="0.95"/><path d="M492.10 238.40V268.30" stroke="#2fa52f" stroke-width="0.8"/><rect x="489.55" y="251.40" width="5.1" height="16.90" fill="#000" stroke="#33ad33" stroke-width="0.85"/><path d="M500.99 249.00V268.00" stroke="#2fa52f" stroke-width="0.8"/><rect x="498.69" y="251.50" width="4.6" height="16.40" fill="#ffffff" stroke="#7be07b" stroke-width="0.95"/><path d="M509.88 268.00V294.40" stroke="#2fa52f" stroke-width="0.8"/><rect x="507.58" y="268.10" width="4.6" height="24.90" fill="#ffffff" stroke="#7be07b" stroke-width="0.95"/><path d="M518.77 273.40V299.50" stroke="#2fa52f" stroke-width="0.8"/><path d="M516.17 293.00H521.37" stroke="#33ad33" stroke-width="0.9"/><path d="M527.66 272.20V296.20" stroke="#2fa52f" stroke-width="0.8"/><rect x="525.11" y="288.50" width="5.1" height="4.00" fill="#000" stroke="#33ad33" stroke-width="0.85"/><path d="M536.55 259.90V290.20" stroke="#2fa52f" stroke-width="0.8"/><rect x="534.00" y="270.80" width="5.1" height="18.60" fill="#000" stroke="#33ad33" stroke-width="0.85"/><path d="M545.44 254.30V275.50" stroke="#2fa52f" stroke-width="0.8"/><rect x="542.89" y="257.30" width="5.1" height="13.50" fill="#000" stroke="#33ad33" stroke-width="0.85"/><path d="M554.33 256.50V287.70" stroke="#2fa52f" stroke-width="0.8"/><rect x="552.03" y="257.40" width="4.6" height="10.80" fill="#ffffff" stroke="#7be07b" stroke-width="0.95"/><path d="M563.22 241.30V270.00" stroke="#2fa52f" stroke-width="0.8"/><rect x="560.67" y="244.20" width="5.1" height="24.60" fill="#000" stroke="#33ad33" stroke-width="0.85"/><path d="M572.11 216.00V254.00" stroke="#2fa52f" stroke-width="0.8"/><rect x="569.56" y="216.90" width="5.1" height="28.30" fill="#000" stroke="#33ad33" stroke-width="0.85"/><path d="M581.00 217.70V230.70" stroke="#2fa52f" stroke-width="0.8"/><rect x="578.70" y="218.30" width="4.6" height="8.60" fill="#ffffff" stroke="#7be07b" stroke-width="0.95"/><path d="M589.89 213.20V227.80" stroke="#2fa52f" stroke-width="0.8"/><rect x="587.34" y="218.20" width="5.1" height="9.30" fill="#000" stroke="#33ad33" stroke-width="0.85"/><path d="M598.78 214.30V222.80" stroke="#2fa52f" stroke-width="0.8"/><rect x="596.23" y="214.30" width="5.1" height="4.20" fill="#000" stroke="#33ad33" stroke-width="0.85"/><path d="M607.67 199.60V223.60" stroke="#2fa52f" stroke-width="0.8"/><rect x="605.12" y="208.40" width="5.1" height="6.40" fill="#000" stroke="#33ad33" stroke-width="0.85"/><path d="M616.56 207.10V226.10" stroke="#2fa52f" stroke-width="0.8"/><rect x="614.26" y="208.90" width="4.6" height="13.30" fill="#ffffff" stroke="#7be07b" stroke-width="0.95"/><path d="M625.45 216.40V230.70" stroke="#2fa52f" stroke-width="0.8"/><rect x="622.90" y="216.40" width="5.1" height="6.90" fill="#000" stroke="#33ad33" stroke-width="0.85"/><path d="M634.34 209.30V227.80" stroke="#2fa52f" stroke-width="0.8"/><rect x="632.04" y="216.50" width="4.6" height="6.50" fill="#ffffff" stroke="#7be07b" stroke-width="0.95"/><path d="M643.23 221.00V240.50" stroke="#2fa52f" stroke-width="0.8"/><rect x="640.93" y="222.40" width="4.6" height="12.40" fill="#ffffff" stroke="#7be07b" stroke-width="0.95"/><path d="M652.12 227.00V235.80" stroke="#2fa52f" stroke-width="0.8"/><rect x="649.57" y="232.50" width="5.1" height="2.90" fill="#000" stroke="#33ad33" stroke-width="0.85"/><path d="M661.01 227.00V260.70" stroke="#2fa52f" stroke-width="0.8"/><path d="M658.41 233.40H663.61" stroke="#33ad33" stroke-width="0.9"/><path d="M669.90 194.30V237.40" stroke="#2fa52f" stroke-width="0.8"/><rect x="667.35" y="196.60" width="5.1" height="37.10" fill="#000" stroke="#33ad33" stroke-width="0.85"/><path d="M678.79 186.50V212.60" stroke="#2fa52f" stroke-width="0.8"/><rect x="676.24" y="192.40" width="5.1" height="4.20" fill="#000" stroke="#33ad33" stroke-width="0.85"/><path d="M687.68 189.00V206.70" stroke="#2fa52f" stroke-width="0.8"/><rect x="685.38" y="193.30" width="4.6" height="10.50" fill="#ffffff" stroke="#7be07b" stroke-width="0.95"/><path d="M696.57 165.50V205.00" stroke="#2fa52f" stroke-width="0.8"/><rect x="694.02" y="166.30" width="5.1" height="37.90" fill="#000" stroke="#33ad33" stroke-width="0.85"/><path d="M705.46 141.80V166.80" stroke="#2fa52f" stroke-width="0.8"/><rect x="702.91" y="156.60" width="5.1" height="9.70" fill="#000" stroke="#33ad33" stroke-width="0.85"/><path d="M714.35 137.60V158.30" stroke="#2fa52f" stroke-width="0.8"/><rect x="711.80" y="144.30" width="5.1" height="12.70" fill="#000" stroke="#33ad33" stroke-width="0.85"/><path d="M723.24 141.00V151.90" stroke="#2fa52f" stroke-width="0.8"/><path d="M720.64 145.20H725.84" stroke="#33ad33" stroke-width="0.9"/><path d="M732.13 138.40V147.40" stroke="#2fa52f" stroke-width="0.8"/><path d="M729.53 146.40H734.73" stroke="#33ad33" stroke-width="0.9"/><path d="M741.02 141.80V155.30" stroke="#2fa52f" stroke-width="0.8"/><rect x="738.72" y="147.00" width="4.6" height="3.60" fill="#ffffff" stroke="#7be07b" stroke-width="0.95"/><path d="M749.91 149.90V181.40" stroke="#2fa52f" stroke-width="0.8"/><rect x="747.61" y="150.80" width="4.6" height="23.80" fill="#ffffff" stroke="#7be07b" stroke-width="0.95"/><path d="M758.80 174.20V200.80" stroke="#2fa52f" stroke-width="0.8"/><rect x="756.50" y="175.30" width="4.6" height="22.60" fill="#ffffff" stroke="#7be07b" stroke-width="0.95"/><path d="M767.69 166.30V199.50" stroke="#2fa52f" stroke-width="0.8"/><rect x="765.14" y="173.50" width="5.1" height="24.80" fill="#000" stroke="#33ad33" stroke-width="0.85"/><path d="M776.58 157.00V175.50" stroke="#2fa52f" stroke-width="0.8"/><rect x="774.03" y="157.80" width="5.1" height="16.00" fill="#000" stroke="#33ad33" stroke-width="0.85"/><path d="M785.47 141.00V158.60" stroke="#2fa52f" stroke-width="0.8"/><rect x="782.92" y="152.30" width="5.1" height="5.50" fill="#000" stroke="#33ad33" stroke-width="0.85"/><path d="M794.36 142.10V169.60" stroke="#2fa52f" stroke-width="0.8"/><rect x="792.06" y="152.40" width="4.6" height="14.10" fill="#ffffff" stroke="#7be07b" stroke-width="0.95"/><path d="M803.25 153.60V170.50" stroke="#2fa52f" stroke-width="0.8"/><rect x="800.70" y="164.60" width="5.1" height="2.50" fill="#000" stroke="#33ad33" stroke-width="0.85"/><path d="M812.14 163.00V180.30" stroke="#2fa52f" stroke-width="0.8"/><rect x="809.84" y="164.70" width="4.6" height="12.10" fill="#ffffff" stroke="#7be07b" stroke-width="0.95"/><path d="M821.03 152.80V177.70" stroke="#2fa52f" stroke-width="0.8"/><rect x="818.48" y="156.10" width="5.1" height="21.10" fill="#000" stroke="#33ad33" stroke-width="0.85"/><path d="M829.92 144.80V157.00" stroke="#2fa52f" stroke-width="0.8"/><rect x="827.37" y="150.20" width="5.1" height="6.30" fill="#000" stroke="#33ad33" stroke-width="0.85"/><path d="M838.81 143.00V163.80" stroke="#2fa52f" stroke-width="0.8"/><rect x="836.26" y="146.60" width="5.1" height="3.50" fill="#000" stroke="#33ad33" stroke-width="0.85"/><path d="M847.70 140.00V156.00" stroke="#2fa52f" stroke-width="0.8"/><rect x="845.15" y="144.00" width="5.1" height="2.40" fill="#000" stroke="#33ad33" stroke-width="0.85"/><path d="M856.59 57.50V147.00" stroke="#2fa52f" stroke-width="0.8"/><rect x="854.04" y="65.00" width="5.1" height="79.00" fill="#000" stroke="#33ad33" stroke-width="0.85"/><path d="M181.0 62.7H1028.7" stroke="#b23a36" stroke-width="0.7"/><path d="M181.0 65.0H1028.7" stroke="#717d8a" stroke-width="0.75"/><path d="M1028.7 53.0V334.3" stroke="#d6d6d6" stroke-width="0.75"/><path d="M181.0 334.3H1028.7" stroke="#d6d6d6" stroke-width="0.75"/><path d="M181.35 334.3v2" stroke="#d6d6d6" stroke-width="0.75"/><path d="M252.47 334.3v2" stroke="#d6d6d6" stroke-width="0.75"/><path d="M323.59 334.3v2" stroke="#d6d6d6" stroke-width="0.75"/><path d="M394.71 334.3v2" stroke="#d6d6d6" stroke-width="0.75"/><path d="M465.83 334.3v2" stroke="#d6d6d6" stroke-width="0.75"/><path d="M536.95 334.3v2" stroke="#d6d6d6" stroke-width="0.75"/><path d="M608.07 334.3v2" stroke="#d6d6d6" stroke-width="0.75"/><path d="M679.19 334.3v2" stroke="#d6d6d6" stroke-width="0.75"/><path d="M750.31 334.3v2" stroke="#d6d6d6" stroke-width="0.75"/><path d="M821.43 334.3v2" stroke="#d6d6d6" stroke-width="0.75"/><path d="M853.2 53h6.6l-3.3 4.3z" fill="#b4b4b4"/></g></svg>
<span class="t" style="top:78.42px;font-size:7.4px;color:#e6e6e6;left:1031.80px;transform-origin:0 50%;transform:scaleX(0.9319);">4575.00</span>
<span class="t" style="top:96.24px;font-size:7.4px;color:#e6e6e6;left:1031.80px;transform-origin:0 50%;transform:scaleX(0.9319);">4573.05</span>
<span class="t" style="top:114.06px;font-size:7.4px;color:#e6e6e6;left:1031.80px;transform-origin:0 50%;transform:scaleX(0.9319);">4571.10</span>
<span class="t" style="top:131.88px;font-size:7.4px;color:#e6e6e6;left:1031.80px;transform-origin:0 50%;transform:scaleX(0.9319);">4569.15</span>
<span class="t" style="top:149.70px;font-size:7.4px;color:#e6e6e6;left:1031.80px;transform-origin:0 50%;transform:scaleX(0.9319);">4567.20</span>
<span class="t" style="top:167.52px;font-size:7.4px;color:#e6e6e6;left:1031.80px;transform-origin:0 50%;transform:scaleX(0.9319);">4565.25</span>
<span class="t" style="top:185.34px;font-size:7.4px;color:#e6e6e6;left:1031.80px;transform-origin:0 50%;transform:scaleX(0.9319);">4563.30</span>
<span class="t" style="top:203.16px;font-size:7.4px;color:#e6e6e6;left:1031.80px;transform-origin:0 50%;transform:scaleX(0.9319);">4561.35</span>
<span class="t" style="top:220.98px;font-size:7.4px;color:#e6e6e6;left:1031.80px;transform-origin:0 50%;transform:scaleX(0.9319);">4559.40</span>
<span class="t" style="top:238.80px;font-size:7.4px;color:#e6e6e6;left:1031.80px;transform-origin:0 50%;transform:scaleX(0.9319);">4557.45</span>
<span class="t" style="top:256.62px;font-size:7.4px;color:#e6e6e6;left:1031.80px;transform-origin:0 50%;transform:scaleX(0.9319);">4555.50</span>
<span class="t" style="top:274.44px;font-size:7.4px;color:#e6e6e6;left:1031.80px;transform-origin:0 50%;transform:scaleX(0.9319);">4553.55</span>
<span class="t" style="top:292.26px;font-size:7.4px;color:#e6e6e6;left:1031.80px;transform-origin:0 50%;transform:scaleX(0.9319);">4551.60</span>
<span class="t" style="top:310.08px;font-size:7.4px;color:#e6e6e6;left:1031.80px;transform-origin:0 50%;transform:scaleX(0.9319);">4549.65</span>
<div style="left:1030.60px;top:58.20px;width:29.60px;height:5.00px;background:#e11d1d;"></div>
<span class="t" style="top:54.20px;font-size:7.4px;color:#ffffff;left:1031.80px;transform-origin:0 50%;transform:scaleX(0.9319);">4577.44</span>
<div style="left:1030.60px;top:62.20px;width:29.60px;height:6.70px;background:#9fb0c4;"></div>
<span class="t" style="top:58.60px;font-size:7.4px;color:#16202c;left:1031.80px;transform-origin:0 50%;transform:scaleX(0.9319);">4577.19</span>
<span class="t" style="top:333.60px;font-size:7.4px;color:#e6e6e6;left:180.95px;transform-origin:0 50%;transform:scaleX(0.8843);">25 Mar 2026</span>
<span class="t" style="top:333.60px;font-size:7.4px;color:#e6e6e6;left:251.17px;transform-origin:0 50%;transform:scaleX(0.9182);">25 Mar 13:14</span>
<span class="t" style="top:333.60px;font-size:7.4px;color:#e6e6e6;left:322.29px;transform-origin:0 50%;transform:scaleX(0.9182);">25 Mar 13:22</span>
<span class="t" style="top:333.60px;font-size:7.4px;color:#e6e6e6;left:393.41px;transform-origin:0 50%;transform:scaleX(0.9182);">25 Mar 13:30</span>
<span class="t" style="top:333.60px;font-size:7.4px;color:#e6e6e6;left:464.53px;transform-origin:0 50%;transform:scaleX(0.9182);">25 Mar 13:38</span>
<span class="t" style="top:333.60px;font-size:7.4px;color:#e6e6e6;left:535.65px;transform-origin:0 50%;transform:scaleX(0.9182);">25 Mar 13:46</span>
<span class="t" style="top:333.60px;font-size:7.4px;color:#e6e6e6;left:606.77px;transform-origin:0 50%;transform:scaleX(0.9182);">25 Mar 13:54</span>
<span class="t" style="top:333.60px;font-size:7.4px;color:#e6e6e6;left:677.89px;transform-origin:0 50%;transform:scaleX(0.9182);">25 Mar 14:02</span>
<span class="t" style="top:333.60px;font-size:7.4px;color:#e6e6e6;left:749.01px;transform-origin:0 50%;transform:scaleX(0.9182);">25 Mar 14:10</span>
<span class="t" style="top:333.60px;font-size:7.4px;color:#e6e6e6;left:820.13px;transform-origin:0 50%;transform:scaleX(0.9182);">25 Mar 14:18</span>
<svg style="left:184.20px;top:57.00px;" width="10.2" height="7" viewBox="0 0 10.2 7"><rect x="0" y="0" width="10.2" height="7" fill="#f4f4f4"/><rect x="0" y="0" width="10.2" height="2.2" fill="#e2574c"/><rect x="0" y="2.9" width="3" height="1.6" fill="#f2a29c"/><rect x="3.6" y="2.9" width="3" height="1.6" fill="#9cc7ea"/><rect x="7.2" y="2.9" width="3" height="1.6" fill="#9cc7ea"/><rect x="0" y="5.2" width="3" height="1.8" fill="#f2a29c"/><rect x="3.6" y="5.2" width="3" height="1.8" fill="#9cc7ea"/><rect x="7.2" y="5.2" width="3" height="1.8" fill="#9cc7ea"/></svg>
<svg style="left:198.50px;top:57.00px;" width="10.5" height="7" viewBox="0 0 10.5 7"><rect x="0" y="0" width="10.5" height="7" fill="#111"/><rect x="0" y="0" width="2.6" height="7" fill="#f08a5a"/><rect x="3.2" y="2.2" width="3" height="4.8" fill="#f4f4f4"/><rect x="3.2" y="0" width="3" height="1.4" fill="#f4f4f4"/><rect x="7" y="0" width="3.4" height="7" fill="#4aa3e0"/><rect x="7" y="1.8" width="1.4" height="2" fill="#111"/></svg>
<span class="t" style="top:54.60px;font-size:7.3px;color:#f4f4f4;left:213.50px;transform-origin:0 50%;transform:scaleX(0.8955);">XAUUSD, M1:  Gold</span>
<div style="left:183.20px;top:67.80px;width:138.50px;height:40.30px;background:#4444ee;"></div>
<div style="left:252.00px;top:84.00px;width:2.00px;height:24.10px;background:#0c0c48;"></div>
<div style="left:183.20px;top:67.80px;width:33.40px;height:15.60px;background:#3434ea;"></div>
<div style="left:288.40px;top:67.80px;width:33.30px;height:15.60px;background:#3434ea;"></div>
<div style="left:183.20px;top:84.20px;width:68.80px;height:23.90px;background:linear-gradient(#3636ee 0%,#2222cc 55%,#1a1aa6 100%);"></div>
<div style="left:254.00px;top:84.20px;width:67.70px;height:23.90px;background:linear-gradient(#3636ee 0%,#2222cc 55%,#1a1aa6 100%);"></div>
<span class="t" style="top:68.40px;font-size:9.2px;color:#dfe4ff;left:190.50px;transform-origin:0 50%;transform:scaleX(0.7205);">SELL</span>
<span class="t" style="top:68.40px;font-size:9.2px;color:#dfe4ff;left:298.20px;transform-origin:0 50%;transform:scaleX(0.8040);">BUY</span>
<div style="left:217.20px;top:67.80px;width:70.50px;height:14.20px;background:#ffffff;border-radius:1px;"></div>
<div style="left:217.60px;top:68.20px;width:13.20px;height:13.40px;background:#e6e6e6;"></div>
<div style="left:274.20px;top:68.20px;width:13.20px;height:13.40px;background:#e6e6e6;"></div>
<svg style="left:222.00px;top:73.90px;" width="4.2" height="2.6" viewBox="0 0 4.2 2.6"><path d="M0 0h4.2l-2.1 2.6z" fill="#222"/></svg>
<svg style="left:278.80px;top:73.70px;" width="4.2" height="2.6" viewBox="0 0 4.2 2.6"><path d="M0 2.6h4.2l-2.1-2.6z" fill="#222"/></svg>
<span class="t" style="top:68.00px;font-size:8.6px;color:#2a2a2a;right:795.00px;transform-origin:100% 50%;transform:scaleX(0.9442);">0.50</span>
<span class="t" style="top:93.40px;font-size:8.4px;color:#ffffff;font-weight:bold;left:195.20px;transform-origin:0 50%;transform:scaleX(1.0461);">4577</span>
<span class="t" style="top:89.30px;font-size:20px;color:#ffffff;left:218.40px;transform-origin:0 50%;transform:scaleX(0.9258);">19</span>
<span class="t" style="top:93.40px;font-size:8.4px;color:#ffffff;font-weight:bold;left:265.20px;transform-origin:0 50%;transform:scaleX(1.0461);">4577</span>
<span class="t" style="top:89.30px;font-size:20px;color:#ffffff;left:287.60px;transform-origin:0 50%;transform:scaleX(0.9798);">44</span>
<div style="left:0.00px;top:349.90px;width:1067.00px;height:208.00px;background:#ffffff;"></div>
<div style="left:0.00px;top:349.90px;width:14.20px;height:208.00px;background:#c6d3e3;"></div>
<svg style="left:4.40px;top:354.20px;" width="6" height="5" viewBox="0 0 6 5"><path d="M0.5 0.4l4.8 4.3M5.3 0.4l-4.8 4.3" stroke="#222" stroke-width="1.2"/></svg>
<span class="t" style="left:0.8px;top:529.8px;font-size:8.4px;color:#333;line-height:10px;height:10px;width:30px;transform-origin:0 0;transform:translate(0,24.6px) rotate(-90deg) scaleX(0.94);">Toolbox</span>
<span class="t" style="top:350.70px;font-size:8.4px;color:#303030;left:19.70px;transform-origin:0 50%;transform:scaleX(0.9993);">Time</span>
<svg style="left:50.60px;top:355.60px;" width="4" height="3" viewBox="0 0 4 3"><path d="M0 3h4l-2-3z" fill="#222"/></svg>
<span class="t" style="top:350.70px;font-size:8.4px;color:#303030;right:883.00px;transform-origin:100% 50%;transform:scaleX(0.9772);">Symbol</span>
<span class="t" style="top:350.70px;font-size:8.4px;color:#303030;right:827.80px;transform-origin:100% 50%;transform:scaleX(1.0667);">Ticket</span>
<span class="t" style="top:350.70px;font-size:8.4px;color:#303030;right:780.00px;transform-origin:100% 50%;transform:scaleX(0.9804);">Type</span>
<span class="t" style="top:350.70px;font-size:8.4px;color:#303030;right:701.60px;transform-origin:100% 50%;transform:scaleX(1.0130);">Volume</span>
<span class="t" style="top:350.70px;font-size:8.4px;color:#303030;right:622.70px;transform-origin:100% 50%;transform:scaleX(1.0108);">Price</span>
<span class="t" style="top:350.70px;font-size:8.4px;color:#303030;right:543.60px;transform-origin:100% 50%;transform:scaleX(0.9052);">S / L</span>
<span class="t" style="top:350.70px;font-size:8.4px;color:#303030;right:464.80px;transform-origin:100% 50%;transform:scaleX(0.9070);">T / P</span>
<span class="t" style="top:350.70px;font-size:8.4px;color:#303030;right:367.60px;transform-origin:100% 50%;transform:scaleX(0.9666);">Time</span>
<span class="t" style="top:350.70px;font-size:8.4px;color:#303030;right:288.40px;transform-origin:100% 50%;transform:scaleX(1.0108);">Price</span>
<span class="t" style="top:350.70px;font-size:8.4px;color:#303030;right:201.30px;transform-origin:100% 50%;transform:scaleX(1.0837);">Profit</span>
<span class="t" style="top:350.70px;font-size:8.4px;color:#303030;right:4.50px;transform-origin:100% 50%;transform:scaleX(1.0244);">Comment</span>
<div style="left:117.20px;top:350.80px;width:0.90px;height:13.20px;background:#dadada;"></div>
<div style="left:188.60px;top:350.80px;width:0.90px;height:13.20px;background:#dadada;"></div>
<div style="left:243.80px;top:350.80px;width:0.90px;height:13.20px;background:#dadada;"></div>
<div style="left:292.00px;top:350.80px;width:0.90px;height:13.20px;background:#dadada;"></div>
<div style="left:369.40px;top:350.80px;width:0.90px;height:13.20px;background:#dadada;"></div>
<div style="left:449.00px;top:350.80px;width:0.90px;height:13.20px;background:#dadada;"></div>
<div style="left:527.30px;top:350.80px;width:0.90px;height:13.20px;background:#dadada;"></div>
<div style="left:606.60px;top:350.80px;width:0.90px;height:13.20px;background:#dadada;"></div>
<div style="left:703.60px;top:350.80px;width:0.90px;height:13.20px;background:#dadada;"></div>
<div style="left:782.60px;top:350.80px;width:0.90px;height:13.20px;background:#dadada;"></div>
<div style="left:869.70px;top:350.80px;width:0.90px;height:13.20px;background:#dadada;"></div>
<svg style="left:17.80px;top:367.62px;" width="8" height="8" viewBox="0 0 8 8"><circle cx="4" cy="4" r="3.4" fill="none" stroke="#333" stroke-width="0.9"/><path d="M4 2.2v3.6M2.2 4h3.6" stroke="#333" stroke-width="0.9"/></svg>
<span class="t" style="top:364.62px;font-size:8.4px;color:#242424;left:30.40px;transform-origin:0 50%;transform:scaleX(0.9008);">2026.03.25 13:18:26.7...</span>
<span class="t" style="top:364.62px;font-size:8.4px;color:#242424;right:826.50px;transform-origin:100% 50%;transform:scaleX(0.9365);">36104358</span>
<span class="t" style="top:364.62px;font-size:8.4px;color:#242424;right:779.00px;transform-origin:100% 50%;transform:scaleX(0.9815);">balance</span>
<span class="t" style="top:364.62px;font-size:8.4px;color:#242424;left:293.50px;transform-origin:0 50%;transform:scaleX(0.9649);">CRM-D-615566</span>
<span class="t" style="top:364.62px;font-size:8.4px;color:#222;right:200.30px;transform-origin:100% 50%;transform:scaleX(0.9338);">15 000.00</span>
<span class="t" style="top:364.62px;font-size:8.4px;color:#242424;right:2.70px;transform-origin:100% 50%;transform:scaleX(0.9769);">CRM-D-615566</span>
<div style="left:14.20px;top:378.35px;width:1052.80px;height:13.85px;background:#ececec;"></div>
<svg style="left:18.00px;top:380.38px;" width="7.6" height="10.2" viewBox="0 0 7.6 10.2"><rect x="0.5" y="0.5" width="6.6" height="9.2" rx="1.2" fill="#fff" stroke="#3f8ad0" stroke-width="0.9"/><path d="M3.3 3.2h1.2M3.3 5.2h1.2" stroke="#3f8ad0" stroke-width="0.9"/></svg>
<span class="t" style="top:378.48px;font-size:8.4px;color:#242424;left:30.40px;transform-origin:0 50%;transform:scaleX(0.9008);">2026.03.25 14:02:14.9...</span>
<span class="t" style="top:378.48px;font-size:8.4px;color:#242424;right:881.00px;transform-origin:100% 50%;transform:scaleX(0.9328);">xauusd</span>
<span class="t" style="top:378.48px;font-size:8.4px;color:#242424;right:826.50px;transform-origin:100% 50%;transform:scaleX(0.9686);">39116911</span>
<span class="t" style="top:378.48px;font-size:8.4px;color:#242424;right:779.00px;transform-origin:100% 50%;transform:scaleX(0.9766);">buy</span>
<span class="t" style="top:378.48px;font-size:8.4px;color:#242424;right:699.60px;transform-origin:100% 50%;transform:scaleX(0.8990);">5</span>
<span class="t" style="top:378.48px;font-size:8.4px;color:#242424;right:620.60px;transform-origin:100% 50%;transform:scaleX(0.9511);">4562.44</span>
<div style="left:527.80px;top:378.60px;width:78.80px;height:13.25px;background:#5edb5e;"></div>
<span class="t" style="top:378.48px;font-size:8.4px;color:#1f2f1f;right:463.20px;transform-origin:100% 50%;transform:scaleX(0.9379);">4572.44</span>
<span class="t" style="top:378.48px;font-size:8.4px;color:#242424;right:365.90px;transform-origin:100% 50%;transform:scaleX(0.9275);">2026.03.25 14:22:27.479</span>
<span class="t" style="top:378.48px;font-size:8.4px;color:#242424;right:286.90px;transform-origin:100% 50%;transform:scaleX(0.9511);">4569.13</span>
<span class="t" style="top:378.48px;font-size:8.4px;color:#3b3bd0;right:200.30px;transform-origin:100% 50%;transform:scaleX(0.9414);">3 345.00</span>
<svg style="left:18.00px;top:394.22px;" width="7.6" height="10.2" viewBox="0 0 7.6 10.2"><rect x="0.5" y="0.5" width="6.6" height="9.2" rx="1.2" fill="#fff" stroke="#3f8ad0" stroke-width="0.9"/><path d="M3.3 3.2h1.2M3.3 5.2h1.2" stroke="#3f8ad0" stroke-width="0.9"/></svg>
<span class="t" style="top:392.32px;font-size:8.4px;color:#242424;left:30.40px;transform-origin:0 50%;transform:scaleX(0.9008);">2026.03.25 14:02:21.2...</span>
<span class="t" style="top:392.32px;font-size:8.4px;color:#242424;right:881.00px;transform-origin:100% 50%;transform:scaleX(0.9328);">xauusd</span>
<span class="t" style="top:392.32px;font-size:8.4px;color:#242424;right:826.50px;transform-origin:100% 50%;transform:scaleX(0.9525);">39117071</span>
<span class="t" style="top:392.32px;font-size:8.4px;color:#242424;right:779.00px;transform-origin:100% 50%;transform:scaleX(0.9766);">buy</span>
<span class="t" style="top:392.32px;font-size:8.4px;color:#242424;right:699.60px;transform-origin:100% 50%;transform:scaleX(0.8990);">5</span>
<span class="t" style="top:392.32px;font-size:8.4px;color:#242424;right:620.60px;transform-origin:100% 50%;transform:scaleX(0.9511);">4561.74</span>
<div style="left:527.80px;top:392.45px;width:78.80px;height:13.25px;background:#5edb5e;"></div>
<span class="t" style="top:392.32px;font-size:8.4px;color:#1f2f1f;right:463.20px;transform-origin:100% 50%;transform:scaleX(0.9379);">4571.74</span>
<span class="t" style="top:392.32px;font-size:8.4px;color:#242424;right:365.90px;transform-origin:100% 50%;transform:scaleX(0.9275);">2026.03.25 14:22:24.308</span>
<span class="t" style="top:392.32px;font-size:8.4px;color:#242424;right:286.90px;transform-origin:100% 50%;transform:scaleX(0.9511);">4567.60</span>
<span class="t" style="top:392.32px;font-size:8.4px;color:#3b3bd0;right:200.30px;transform-origin:100% 50%;transform:scaleX(0.9414);">2 930.00</span>
<div style="left:14.20px;top:406.05px;width:1052.80px;height:13.85px;background:#ececec;"></div>
<svg style="left:18.00px;top:408.07px;" width="7.6" height="10.2" viewBox="0 0 7.6 10.2"><rect x="0.5" y="0.5" width="6.6" height="9.2" rx="1.2" fill="#fff" stroke="#3f8ad0" stroke-width="0.9"/><path d="M3.3 3.2h1.2M3.3 5.2h1.2" stroke="#3f8ad0" stroke-width="0.9"/></svg>
<span class="t" style="top:406.18px;font-size:8.4px;color:#242424;left:30.40px;transform-origin:0 50%;transform:scaleX(0.9008);">2026.03.25 14:02:27.0...</span>
<span class="t" style="top:406.18px;font-size:8.4px;color:#242424;right:881.00px;transform-origin:100% 50%;transform:scaleX(0.9328);">xauusd</span>
<span class="t" style="top:406.18px;font-size:8.4px;color:#242424;right:826.50px;transform-origin:100% 50%;transform:scaleX(0.9525);">39117226</span>
<span class="t" style="top:406.18px;font-size:8.4px;color:#242424;right:779.00px;transform-origin:100% 50%;transform:scaleX(0.9766);">buy</span>
<span class="t" style="top:406.18px;font-size:8.4px;color:#242424;right:699.60px;transform-origin:100% 50%;transform:scaleX(0.8990);">5</span>
<span class="t" style="top:406.18px;font-size:8.4px;color:#242424;right:620.60px;transform-origin:100% 50%;transform:scaleX(0.9511);">4561.91</span>
<div style="left:527.80px;top:406.30px;width:78.80px;height:13.25px;background:#5edb5e;"></div>
<span class="t" style="top:406.18px;font-size:8.4px;color:#1f2f1f;right:463.20px;transform-origin:100% 50%;transform:scaleX(0.9379);">4571.91</span>
<span class="t" style="top:406.18px;font-size:8.4px;color:#242424;right:365.90px;transform-origin:100% 50%;transform:scaleX(0.9275);">2026.03.25 14:22:24.360</span>
<span class="t" style="top:406.18px;font-size:8.4px;color:#242424;right:286.90px;transform-origin:100% 50%;transform:scaleX(0.9511);">4567.47</span>
<span class="t" style="top:406.18px;font-size:8.4px;color:#3b3bd0;right:200.30px;transform-origin:100% 50%;transform:scaleX(0.9414);">2 780.00</span>
<svg style="left:18.00px;top:421.92px;" width="7.6" height="10.2" viewBox="0 0 7.6 10.2"><rect x="0.5" y="0.5" width="6.6" height="9.2" rx="1.2" fill="#fff" stroke="#3f8ad0" stroke-width="0.9"/><path d="M3.3 3.2h1.2M3.3 5.2h1.2" stroke="#3f8ad0" stroke-width="0.9"/></svg>
<span class="t" style="top:420.02px;font-size:8.4px;color:#242424;left:30.40px;transform-origin:0 50%;transform:scaleX(0.9008);">2026.03.25 14:10:31.7...</span>
<span class="t" style="top:420.02px;font-size:8.4px;color:#242424;right:881.00px;transform-origin:100% 50%;transform:scaleX(0.9328);">xauusd</span>
<span class="t" style="top:420.02px;font-size:8.4px;color:#242424;right:826.50px;transform-origin:100% 50%;transform:scaleX(0.9365);">39125203</span>
<span class="t" style="top:420.02px;font-size:8.4px;color:#242424;right:779.00px;transform-origin:100% 50%;transform:scaleX(0.9766);">buy</span>
<span class="t" style="top:420.02px;font-size:8.4px;color:#242424;right:699.60px;transform-origin:100% 50%;transform:scaleX(0.8990);">2</span>
<span class="t" style="top:420.02px;font-size:8.4px;color:#242424;right:620.60px;transform-origin:100% 50%;transform:scaleX(0.9711);">4567.11</span>
<div style="left:527.80px;top:420.15px;width:78.80px;height:13.25px;background:#5edb5e;"></div>
<span class="t" style="top:420.02px;font-size:8.4px;color:#1f2f1f;right:463.20px;transform-origin:100% 50%;transform:scaleX(0.9576);">4568.11</span>
<span class="t" style="top:420.02px;font-size:8.4px;color:#242424;right:365.90px;transform-origin:100% 50%;transform:scaleX(0.9275);">2026.03.25 14:19:58.035</span>
<span class="t" style="top:420.02px;font-size:8.4px;color:#242424;right:286.90px;transform-origin:100% 50%;transform:scaleX(0.9511);">4566.88</span>
<span class="t" style="top:420.02px;font-size:8.4px;color:#e03a3a;right:200.30px;transform-origin:100% 50%;transform:scaleX(0.8926);">-46.00</span>
<div style="left:14.20px;top:433.75px;width:1052.80px;height:13.85px;background:#ececec;"></div>
<svg style="left:18.00px;top:435.77px;" width="7.6" height="10.2" viewBox="0 0 7.6 10.2"><rect x="0.5" y="0.5" width="6.6" height="9.2" rx="1.2" fill="#fff" stroke="#3f8ad0" stroke-width="0.9"/><path d="M3.3 3.2h1.2M3.3 5.2h1.2" stroke="#3f8ad0" stroke-width="0.9"/></svg>
<span class="t" style="top:433.88px;font-size:8.4px;color:#242424;left:30.40px;transform-origin:0 50%;transform:scaleX(0.9008);">2026.03.25 14:10:40.9...</span>
<span class="t" style="top:433.88px;font-size:8.4px;color:#242424;right:881.00px;transform-origin:100% 50%;transform:scaleX(0.9328);">xauusd</span>
<span class="t" style="top:433.88px;font-size:8.4px;color:#242424;right:826.50px;transform-origin:100% 50%;transform:scaleX(0.9365);">39125291</span>
<span class="t" style="top:433.88px;font-size:8.4px;color:#242424;right:779.00px;transform-origin:100% 50%;transform:scaleX(0.9766);">buy</span>
<span class="t" style="top:433.88px;font-size:8.4px;color:#242424;right:699.60px;transform-origin:100% 50%;transform:scaleX(0.9094);">0.1</span>
<span class="t" style="top:433.88px;font-size:8.4px;color:#242424;right:620.60px;transform-origin:100% 50%;transform:scaleX(0.9511);">4566.71</span>
<span class="t" style="top:433.88px;font-size:8.4px;color:#242424;right:463.20px;transform-origin:100% 50%;transform:scaleX(0.9379);">4572.71</span>
<span class="t" style="top:433.88px;font-size:8.4px;color:#242424;right:365.90px;transform-origin:100% 50%;transform:scaleX(0.9275);">2026.03.25 14:21:40.091</span>
<span class="t" style="top:433.88px;font-size:8.4px;color:#242424;right:286.90px;transform-origin:100% 50%;transform:scaleX(0.9511);">4567.02</span>
<span class="t" style="top:433.88px;font-size:8.4px;color:#3b3bd0;right:200.30px;transform-origin:100% 50%;transform:scaleX(0.8828);">3.10</span>
<svg style="left:18.00px;top:449.62px;" width="7.6" height="10.2" viewBox="0 0 7.6 10.2"><rect x="0.5" y="0.5" width="6.6" height="9.2" rx="1.2" fill="#fff" stroke="#3f8ad0" stroke-width="0.9"/><path d="M3.3 3.2h1.2M3.3 5.2h1.2" stroke="#3f8ad0" stroke-width="0.9"/></svg>
<span class="t" style="top:447.73px;font-size:8.4px;color:#242424;left:30.40px;transform-origin:0 50%;transform:scaleX(0.9008);">2026.03.25 14:10:43.8...</span>
<span class="t" style="top:447.73px;font-size:8.4px;color:#242424;right:881.00px;transform-origin:100% 50%;transform:scaleX(0.9328);">xauusd</span>
<span class="t" style="top:447.73px;font-size:8.4px;color:#242424;right:826.50px;transform-origin:100% 50%;transform:scaleX(0.9365);">39125322</span>
<span class="t" style="top:447.73px;font-size:8.4px;color:#242424;right:779.00px;transform-origin:100% 50%;transform:scaleX(0.9766);">buy</span>
<span class="t" style="top:447.73px;font-size:8.4px;color:#242424;right:699.60px;transform-origin:100% 50%;transform:scaleX(0.9094);">0.1</span>
<span class="t" style="top:447.73px;font-size:8.4px;color:#242424;right:620.60px;transform-origin:100% 50%;transform:scaleX(0.9511);">4566.49</span>
<span class="t" style="top:447.73px;font-size:8.4px;color:#242424;right:365.90px;transform-origin:100% 50%;transform:scaleX(0.9275);">2026.03.25 14:13:56.737</span>
<span class="t" style="top:447.73px;font-size:8.4px;color:#242424;right:286.90px;transform-origin:100% 50%;transform:scaleX(0.9511);">4566.41</span>
<span class="t" style="top:447.73px;font-size:8.4px;color:#e03a3a;right:200.30px;transform-origin:100% 50%;transform:scaleX(0.9113);">-0.80</span>
<div style="left:14.20px;top:461.45px;width:1052.80px;height:13.85px;background:#ececec;"></div>
<svg style="left:18.00px;top:463.47px;" width="7.6" height="10.2" viewBox="0 0 7.6 10.2"><rect x="0.5" y="0.5" width="6.6" height="9.2" rx="1.2" fill="#fff" stroke="#3f8ad0" stroke-width="0.9"/><path d="M3.3 3.2h1.2M3.3 5.2h1.2" stroke="#3f8ad0" stroke-width="0.9"/></svg>
<span class="t" style="top:461.57px;font-size:8.4px;color:#242424;left:30.40px;transform-origin:0 50%;transform:scaleX(0.9070);">2026.03.25 14:11:04.6...</span>
<span class="t" style="top:461.57px;font-size:8.4px;color:#242424;right:881.00px;transform-origin:100% 50%;transform:scaleX(0.9328);">xauusd</span>
<span class="t" style="top:461.57px;font-size:8.4px;color:#242424;right:826.50px;transform-origin:100% 50%;transform:scaleX(0.9365);">39125934</span>
<span class="t" style="top:461.57px;font-size:8.4px;color:#242424;right:779.00px;transform-origin:100% 50%;transform:scaleX(0.9766);">buy</span>
<span class="t" style="top:461.57px;font-size:8.4px;color:#242424;right:699.60px;transform-origin:100% 50%;transform:scaleX(0.8990);">2</span>
<span class="t" style="top:461.57px;font-size:8.4px;color:#242424;right:620.60px;transform-origin:100% 50%;transform:scaleX(0.9511);">4566.18</span>
<div style="left:527.80px;top:461.70px;width:78.80px;height:13.25px;background:#5edb5e;"></div>
<span class="t" style="top:461.57px;font-size:8.4px;color:#1f2f1f;right:463.20px;transform-origin:100% 50%;transform:scaleX(0.9379);">4570.18</span>
<span class="t" style="top:461.57px;font-size:8.4px;color:#242424;right:365.90px;transform-origin:100% 50%;transform:scaleX(0.9275);">2026.03.25 14:22:19.825</span>
<span class="t" style="top:461.57px;font-size:8.4px;color:#242424;right:286.90px;transform-origin:100% 50%;transform:scaleX(0.9511);">4570.18</span>
<span class="t" style="top:461.57px;font-size:8.4px;color:#3b3bd0;right:200.30px;transform-origin:100% 50%;transform:scaleX(0.9600);">800.00</span>
<svg style="left:18.00px;top:477.32px;" width="7.6" height="10.2" viewBox="0 0 7.6 10.2"><rect x="0.5" y="0.5" width="6.6" height="9.2" rx="1.2" fill="#fff" stroke="#3f8ad0" stroke-width="0.9"/><path d="M3.3 3.2h1.2M3.3 5.2h1.2" stroke="#3f8ad0" stroke-width="0.9"/></svg>
<span class="t" style="top:475.43px;font-size:8.4px;color:#242424;left:30.40px;transform-origin:0 50%;transform:scaleX(0.9070);">2026.03.25 14:11:48.5...</span>
<span class="t" style="top:475.43px;font-size:8.4px;color:#242424;right:881.00px;transform-origin:100% 50%;transform:scaleX(0.9328);">xauusd</span>
<span class="t" style="top:475.43px;font-size:8.4px;color:#242424;right:826.50px;transform-origin:100% 50%;transform:scaleX(0.9365);">39127043</span>
<span class="t" style="top:475.43px;font-size:8.4px;color:#242424;right:779.00px;transform-origin:100% 50%;transform:scaleX(0.9766);">buy</span>
<span class="t" style="top:475.43px;font-size:8.4px;color:#242424;right:699.60px;transform-origin:100% 50%;transform:scaleX(0.9094);">0.5</span>
<span class="t" style="top:475.43px;font-size:8.4px;color:#242424;right:620.60px;transform-origin:100% 50%;transform:scaleX(0.9511);">4563.57</span>
<div style="left:527.80px;top:475.55px;width:78.80px;height:13.25px;background:#5edb5e;"></div>
<span class="t" style="top:475.43px;font-size:8.4px;color:#1f2f1f;right:463.20px;transform-origin:100% 50%;transform:scaleX(0.9379);">4570.03</span>
<span class="t" style="top:475.43px;font-size:8.4px;color:#242424;right:365.90px;transform-origin:100% 50%;transform:scaleX(0.9275);">2026.03.25 14:22:19.762</span>
<span class="t" style="top:475.43px;font-size:8.4px;color:#242424;right:286.90px;transform-origin:100% 50%;transform:scaleX(0.9511);">4570.03</span>
<span class="t" style="top:475.43px;font-size:8.4px;color:#3b3bd0;right:200.30px;transform-origin:100% 50%;transform:scaleX(0.9600);">323.00</span>
<div style="left:14.20px;top:489.15px;width:1052.80px;height:13.85px;background:#ececec;"></div>
<svg style="left:18.00px;top:491.17px;" width="7.6" height="10.2" viewBox="0 0 7.6 10.2"><rect x="0.5" y="0.5" width="6.6" height="9.2" rx="1.2" fill="#fff" stroke="#3f8ad0" stroke-width="0.9"/><path d="M3.3 3.2h1.2M3.3 5.2h1.2" stroke="#3f8ad0" stroke-width="0.9"/></svg>
<span class="t" style="top:489.27px;font-size:8.4px;color:#242424;left:30.40px;transform-origin:0 50%;transform:scaleX(0.9070);">2026.03.25 14:11:50.8...</span>
<span class="t" style="top:489.27px;font-size:8.4px;color:#242424;right:881.00px;transform-origin:100% 50%;transform:scaleX(0.9328);">xauusd</span>
<span class="t" style="top:489.27px;font-size:8.4px;color:#242424;right:826.50px;transform-origin:100% 50%;transform:scaleX(0.9365);">39127088</span>
<span class="t" style="top:489.27px;font-size:8.4px;color:#242424;right:779.00px;transform-origin:100% 50%;transform:scaleX(0.9766);">buy</span>
<span class="t" style="top:489.27px;font-size:8.4px;color:#242424;right:699.60px;transform-origin:100% 50%;transform:scaleX(0.9094);">0.5</span>
<span class="t" style="top:489.27px;font-size:8.4px;color:#242424;right:620.60px;transform-origin:100% 50%;transform:scaleX(0.9511);">4563.61</span>
<div style="left:527.80px;top:489.40px;width:78.80px;height:13.25px;background:#5edb5e;"></div>
<span class="t" style="top:489.27px;font-size:8.4px;color:#1f2f1f;right:463.20px;transform-origin:100% 50%;transform:scaleX(0.9379);">4570.15</span>
<span class="t" style="top:489.27px;font-size:8.4px;color:#242424;right:365.90px;transform-origin:100% 50%;transform:scaleX(0.9275);">2026.03.25 14:22:19.827</span>
<span class="t" style="top:489.27px;font-size:8.4px;color:#242424;right:286.90px;transform-origin:100% 50%;transform:scaleX(0.9511);">4570.14</span>
<span class="t" style="top:489.27px;font-size:8.4px;color:#3b3bd0;right:200.30px;transform-origin:100% 50%;transform:scaleX(0.9600);">326.50</span>
<svg style="left:18.00px;top:505.02px;" width="7.6" height="10.2" viewBox="0 0 7.6 10.2"><rect x="0.5" y="0.5" width="6.6" height="9.2" rx="1.2" fill="#fff" stroke="#3f8ad0" stroke-width="0.9"/><path d="M3.3 3.2h1.2M3.3 5.2h1.2" stroke="#3f8ad0" stroke-width="0.9"/></svg>
<span class="t" style="top:503.12px;font-size:8.4px;color:#242424;left:30.40px;transform-origin:0 50%;transform:scaleX(0.9070);">2026.03.25 14:11:51.9...</span>
<span class="t" style="top:503.12px;font-size:8.4px;color:#242424;right:881.00px;transform-origin:100% 50%;transform:scaleX(0.9328);">xauusd</span>
<span class="t" style="top:503.12px;font-size:8.4px;color:#242424;right:826.50px;transform-origin:100% 50%;transform:scaleX(0.9365);">39127098</span>
<span class="t" style="top:503.12px;font-size:8.4px;color:#242424;right:779.00px;transform-origin:100% 50%;transform:scaleX(0.9766);">buy</span>
<span class="t" style="top:503.12px;font-size:8.4px;color:#242424;right:699.60px;transform-origin:100% 50%;transform:scaleX(0.9094);">0.5</span>
<span class="t" style="top:503.12px;font-size:8.4px;color:#242424;right:620.60px;transform-origin:100% 50%;transform:scaleX(0.9511);">4563.69</span>
<div style="left:527.80px;top:503.25px;width:78.80px;height:13.25px;background:#5edb5e;"></div>
<span class="t" style="top:503.12px;font-size:8.4px;color:#1f2f1f;right:463.20px;transform-origin:100% 50%;transform:scaleX(0.9379);">4570.15</span>
<span class="t" style="top:503.12px;font-size:8.4px;color:#242424;right:365.90px;transform-origin:100% 50%;transform:scaleX(0.9275);">2026.03.25 14:22:19.833</span>
<span class="t" style="top:503.12px;font-size:8.4px;color:#242424;right:286.90px;transform-origin:100% 50%;transform:scaleX(0.9511);">4570.14</span>
<span class="t" style="top:503.12px;font-size:8.4px;color:#3b3bd0;right:200.30px;transform-origin:100% 50%;transform:scaleX(0.9600);">322.50</span>
<div style="left:14.20px;top:518.10px;width:1052.80px;height:12.60px;background:#d2d2d2;"></div>
<svg style="left:17.40px;top:520.30px;" width="8" height="8" viewBox="0 0 8 8"><circle cx="4" cy="4" r="3.4" fill="none" stroke="#333" stroke-width="0.9"/><path d="M4 2.2v3.6M2.2 4h3.6" stroke="#333" stroke-width="0.9"/></svg>
<span class="t" style="top:517.10px;font-size:8.4px;color:#1a1a1a;font-weight:bold;left:30.40px;transform-origin:0 50%;transform:scaleX(1.0027);">Profit: 10 783.30  Credit: 0.00  Deposit: 15 000.00  Withdrawal: 0.00  Balance: 25 783.30</span>
<span class="t" style="top:517.10px;font-size:8.4px;color:#1a1a1a;font-weight:bold;right:200.30px;transform-origin:100% 50%;transform:scaleX(1.0412);">10 783.30</span>
<span class="t" style="top:519.70px;font-size:11.2px;color:rgba(120,120,120,0.22);left:889.20px;transform-origin:0 50%;transform:scaleX(0.9819);">Activate Windows</span>
<span class="t" style="top:531.60px;font-size:8.1px;color:rgba(120,120,120,0.22);left:889.20px;transform-origin:0 50%;transform:scaleX(1.0034);">Go to Settings to activate Windows.</span>
<div style="left:14.20px;top:539.60px;width:1052.80px;height:17.70px;background:#f1f1f1;"></div>
<div style="left:14.20px;top:539.60px;width:87.00px;height:0.90px;background:#3c3c3c;"></div>
<div style="left:141.70px;top:539.60px;width:925.30px;height:0.90px;background:#3c3c3c;"></div>
<div style="left:101.20px;top:538.80px;width:40.50px;height:14.80px;background:#ffffff;border:0.9px solid #3c3c3c;border-top:none;box-sizing:border-box;"></div>
<span class="t" style="top:540.60px;font-size:8.4px;color:#8c8c8c;left:25.30px;transform-origin:0 50%;transform:scaleX(0.9361);">Trade</span>
<span class="t" style="top:540.60px;font-size:8.4px;color:#8c8c8c;left:60.00px;transform-origin:0 50%;transform:scaleX(0.9268);">Exposure</span>
<span class="t" style="top:540.60px;font-size:8.4px;color:#222;left:108.00px;transform-origin:0 50%;transform:scaleX(0.9976);">History</span>
<span class="t" style="top:540.60px;font-size:8.4px;color:#8c8c8c;left:148.40px;transform-origin:0 50%;transform:scaleX(0.9354);">News</span>
<span class="t" style="top:540.60px;font-size:8.4px;color:#8c8c8c;left:182.90px;transform-origin:0 50%;transform:scaleX(1.0257);">Mailbox</span>
<span class="t" style="top:540.60px;font-size:8.4px;color:#8c8c8c;left:240.20px;transform-origin:0 50%;transform:scaleX(0.9529);">Calendar</span>
<span class="t" style="top:540.60px;font-size:8.4px;color:#8c8c8c;left:287.40px;transform-origin:0 50%;transform:scaleX(0.9709);">Company</span>
<span class="t" style="top:540.60px;font-size:8.4px;color:#8c8c8c;left:337.40px;transform-origin:0 50%;transform:scaleX(0.9896);">Alerts</span>
<span class="t" style="top:540.60px;font-size:8.4px;color:#8c8c8c;left:372.70px;transform-origin:0 50%;transform:scaleX(0.9939);">Articles</span>
<span class="t" style="top:540.60px;font-size:8.4px;color:#8c8c8c;left:414.90px;transform-origin:0 50%;transform:scaleX(0.9195);">Code Base</span>
<span class="t" style="top:540.60px;font-size:8.4px;color:#8c8c8c;left:468.20px;transform-origin:0 50%;transform:scaleX(0.9259);">Experts</span>
<span class="t" style="top:540.60px;font-size:8.4px;color:#8c8c8c;left:508.70px;transform-origin:0 50%;transform:scaleX(0.9575);">Journal</span>
<span class="t" style="top:542.70px;font-size:6.4px;color:#e8202a;font-weight:bold;left:215.00px;transform-origin:0 50%;transform:scaleX(1.0642);">11</span>
<div style="left:53.00px;top:542.60px;width:0.90px;height:10.20px;background:#b9b9b9;"></div>
<div style="left:175.40px;top:542.60px;width:0.90px;height:10.20px;background:#b9b9b9;"></div>
<div style="left:233.50px;top:542.60px;width:0.90px;height:10.20px;background:#b9b9b9;"></div>
<div style="left:280.70px;top:542.60px;width:0.90px;height:10.20px;background:#b9b9b9;"></div>
<div style="left:330.00px;top:542.60px;width:0.90px;height:10.20px;background:#b9b9b9;"></div>
<div style="left:366.00px;top:542.60px;width:0.90px;height:10.20px;background:#b9b9b9;"></div>
<div style="left:407.50px;top:542.60px;width:0.90px;height:10.20px;background:#b9b9b9;"></div>
<div style="left:460.80px;top:542.60px;width:0.90px;height:10.20px;background:#b9b9b9;"></div>
<div style="left:502.00px;top:542.60px;width:0.90px;height:10.20px;background:#b9b9b9;"></div>
<svg style="left:898.80px;top:542.60px;" width="8" height="10.4" viewBox="0 0 8 10.4"><path d="M2.4 3.2v-0.9a1.6 1.6 0 0 1 3.2 0v0.9" fill="none" stroke="#e0a200" stroke-width="0.9"/><path d="M0.5 3.2h7l0.3 6.8h-7.6z" fill="#fbc21a" stroke="#e5a800" stroke-width="0.4"/></svg>
<span class="t" style="top:541.60px;font-size:8.4px;color:#222;left:911.80px;transform-origin:0 50%;transform:scaleX(0.9606);">Market</span>
<svg style="left:944.60px;top:543.80px;" width="10.6" height="9" viewBox="0 0 10.6 9"><circle cx="5.3" cy="4.5" r="0.9" fill="#c0c0c0"/><path d="M3.5 2.7a2.6 2.6 0 0 0 0 3.6M7.1 2.7a2.6 2.6 0 0 1 0 3.6M2 1.2a4.7 4.7 0 0 0 0 6.6M8.6 1.2a4.7 4.7 0 0 1 0 6.6" fill="none" stroke="#c6c6c6" stroke-width="0.8"/></svg>
<span class="t" style="top:541.60px;font-size:8.4px;color:#a9a9a9;left:958.30px;transform-origin:0 50%;transform:scaleX(0.9247);">Signals</span>
<svg style="left:992.00px;top:543.00px;" width="11.4" height="11" viewBox="0 0 11.4 11"><path d="M2.8 6.4a2 2 0 0 1 0.3-4a2.9 2.9 0 0 1 5.4 0.5a1.8 1.8 0 0 1 0 3.5z" fill="#dcecf9" stroke="#2f7fc2" stroke-width="0.9"/><path d="M5.6 6.6v2.6M2.2 9.4h6.8" stroke="#2f7fc2" stroke-width="0.9"/></svg>
<span class="t" style="top:541.60px;font-size:8.4px;color:#222;left:1005.60px;transform-origin:0 50%;transform:scaleX(0.7993);">VPS</span>
<svg style="left:1025.60px;top:543.20px;" width="10.6" height="10.6" viewBox="0 0 10.6 10.6"><path d="M3.2 0.7h4.2l2.5 2.5v4.2l-2.5 2.5h-4.2l-2.5-2.5v-4.2z" fill="#cfe5f8" stroke="#2f7fc2" stroke-width="1.3" stroke-linejoin="round"/></svg>
<span class="t" style="top:541.60px;font-size:8.4px;color:#222;left:1040.30px;transform-origin:0 50%;transform:scaleX(0.9468);">Tester</span>
<div style="left:0.00px;top:557.30px;width:1067.00px;height:15.20px;background:#f1f1f1;"></div>
<div style="left:0.00px;top:557.20px;width:1067.00px;height:0.80px;background:#dedede;"></div>
<span class="t" style="top:558.20px;font-size:8.4px;color:#222;left:1.70px;transform-origin:0 50%;transform:scaleX(0.9242);">For Help, press F1</span>
<span class="t" style="top:558.20px;font-size:8.4px;color:#222;left:586.30px;transform-origin:0 50%;transform:scaleX(1.0434);">Default</span>
<span class="t" style="top:558.20px;font-size:8.4px;color:#222;left:677.40px;transform-origin:0 50%;transform:scaleX(0.9355);">2026.03.25 13:44</span>
<span class="t" style="top:558.20px;font-size:8.4px;color:#222;left:747.50px;transform-origin:0 50%;transform:scaleX(0.9191);">O: 4552.16</span>
<span class="t" style="top:558.20px;font-size:8.4px;color:#222;left:797.40px;transform-origin:0 50%;transform:scaleX(0.9223);">H: 4554.23</span>
<span class="t" style="top:558.20px;font-size:8.4px;color:#222;left:846.00px;transform-origin:0 50%;transform:scaleX(0.9193);">L: 4551.63</span>
<span class="t" style="top:558.20px;font-size:8.4px;color:#222;left:894.20px;transform-origin:0 50%;transform:scaleX(0.9077);">C: 4552.29</span>
<span class="t" style="top:558.20px;font-size:8.4px;color:#222;left:942.20px;transform-origin:0 50%;transform:scaleX(0.9161);">V: 410</span>
<span class="t" style="top:558.20px;font-size:8.4px;color:#222;left:1003.20px;transform-origin:0 50%;transform:scaleX(0.9726);">1724 / 10 Kb</span>
<div style="left:583.60px;top:558.60px;width:0.90px;height:13.00px;background:#d0d0d0;"></div>
<div style="left:674.00px;top:558.60px;width:0.90px;height:13.00px;background:#d0d0d0;"></div>
<div style="left:743.40px;top:558.60px;width:0.90px;height:13.00px;background:#d0d0d0;"></div>
<div style="left:793.00px;top:558.60px;width:0.90px;height:13.00px;background:#d0d0d0;"></div>
<div style="left:842.00px;top:558.60px;width:0.90px;height:13.00px;background:#d0d0d0;"></div>
<div style="left:890.20px;top:558.60px;width:0.90px;height:13.00px;background:#d0d0d0;"></div>
<div style="left:938.80px;top:558.60px;width:0.90px;height:13.00px;background:#d0d0d0;"></div>
<div style="left:985.30px;top:558.60px;width:0.90px;height:13.00px;background:#d0d0d0;"></div>
<svg style="left:988.60px;top:562.00px;" width="7.4" height="6.4" viewBox="0 0 7.4 6.4"><path d="M0.6 6.2v-1.4M2.4 6.2v-2.6M4.2 6.2v-4" stroke="#3cb34a" stroke-width="1"/><path d="M6 6.2v-5.6" stroke="#c9c9c9" stroke-width="1"/></svg>
<div style="left:0.00px;top:571.90px;width:1067.00px;height:28.10px;background:linear-gradient(90deg,#1f3541 0%,#1c303f 35%,#18273a 60%,#151d33 100%);"></div>
<svg style="left:10.60px;top:580.00px;" width="12" height="12" viewBox="0 0 12 12"><path d="M0 1.6l5-0.7v4.7h-5zM5.7 0.8l6.3-0.9v5.7h-6.3zM0 6.3h5v4.7l-5-0.7zM5.7 6.3h6.3v5.7l-6.3-0.9z" fill="#ffffff"/></svg>
<svg style="left:44.00px;top:580.00px;" width="12" height="12" viewBox="0 0 12 12"><circle cx="7.2" cy="4.6" r="3.6" fill="none" stroke="#e8e8e8" stroke-width="1.1"/><path d="M4.6 7.2l-4 4.2" stroke="#e8e8e8" stroke-width="1.2"/></svg>
<svg style="left:77.50px;top:578.00px;" width="15" height="16" viewBox="0 0 15 16"><rect x="0" y="0" width="15" height="16" fill="#0d3f4f"/><path d="M4 4.2l3 7 3.2-7" fill="none" stroke="#ffffff" stroke-width="1.6"/><path d="M8.3 7.2l1.6-3h1.4z" fill="#e0503a"/></svg>
<svg style="left:111.50px;top:576.50px;" width="17" height="18" viewBox="0 0 17 18"><ellipse cx="8.5" cy="4.8" rx="4.9" ry="4.3" fill="#559a46"/><ellipse cx="6.6" cy="4" rx="1.6" ry="1.9" fill="#79b765"/><ellipse cx="10.4" cy="4.2" rx="1.5" ry="1.8" fill="#6aab58"/><ellipse cx="4.2" cy="12.8" rx="4" ry="4.7" fill="#d2c535"/><ellipse cx="3.6" cy="11.6" rx="2" ry="2.2" fill="#e4d94e"/><ellipse cx="12.9" cy="13.2" rx="4.1" ry="4.4" fill="#2c78b8"/><ellipse cx="13.6" cy="12" rx="2" ry="1.8" fill="#4a9ad6"/><circle cx="8.7" cy="10.6" r="4" fill="#fbf5d8"/><text x="8.7" y="12.9" font-size="6.4" font-weight="bold" text-anchor="middle" fill="#e9a11c" font-family="Liberation Sans">$</text></svg>
<svg style="left:351.50px;top:576.50px;" width="17" height="18" viewBox="0 0 17 18"><ellipse cx="8.5" cy="4.8" rx="4.9" ry="4.3" fill="#559a46"/><ellipse cx="6.6" cy="4" rx="1.6" ry="1.9" fill="#79b765"/><ellipse cx="10.4" cy="4.2" rx="1.5" ry="1.8" fill="#6aab58"/><ellipse cx="4.2" cy="12.8" rx="4" ry="4.7" fill="#d2c535"/><ellipse cx="3.6" cy="11.6" rx="2" ry="2.2" fill="#e4d94e"/><ellipse cx="12.9" cy="13.2" rx="4.1" ry="4.4" fill="#2c78b8"/><ellipse cx="13.6" cy="12" rx="2" ry="1.8" fill="#4a9ad6"/><circle cx="8.7" cy="10.6" r="4" fill="#fbf5d8"/><text x="8.7" y="12.9" font-size="6.4" font-weight="bold" text-anchor="middle" fill="#e9a11c" font-family="Liberation Sans">$</text></svg>
<svg style="left:386.00px;top:576.50px;" width="17" height="18" viewBox="0 0 17 18"><ellipse cx="8.5" cy="4.8" rx="4.9" ry="4.3" fill="#559a46"/><ellipse cx="6.6" cy="4" rx="1.6" ry="1.9" fill="#79b765"/><ellipse cx="10.4" cy="4.2" rx="1.5" ry="1.8" fill="#6aab58"/><ellipse cx="4.2" cy="12.8" rx="4" ry="4.7" fill="#d2c535"/><ellipse cx="3.6" cy="11.6" rx="2" ry="2.2" fill="#e4d94e"/><ellipse cx="12.9" cy="13.2" rx="4.1" ry="4.4" fill="#2c78b8"/><ellipse cx="13.6" cy="12" rx="2" ry="1.8" fill="#4a9ad6"/><circle cx="8.7" cy="10.6" r="4" fill="#fbf5d8"/><text x="8.7" y="12.9" font-size="6.4" font-weight="bold" text-anchor="middle" fill="#e9a11c" font-family="Liberation Sans">$</text></svg>
<svg style="left:593.00px;top:576.50px;" width="17" height="18" viewBox="0 0 17 18"><ellipse cx="8.5" cy="4.8" rx="4.9" ry="4.3" fill="#559a46"/><ellipse cx="6.6" cy="4" rx="1.6" ry="1.9" fill="#79b765"/><ellipse cx="10.4" cy="4.2" rx="1.5" ry="1.8" fill="#6aab58"/><ellipse cx="4.2" cy="12.8" rx="4" ry="4.7" fill="#d2c535"/><ellipse cx="3.6" cy="11.6" rx="2" ry="2.2" fill="#e4d94e"/><ellipse cx="12.9" cy="13.2" rx="4.1" ry="4.4" fill="#2c78b8"/><ellipse cx="13.6" cy="12" rx="2" ry="1.8" fill="#4a9ad6"/><circle cx="8.7" cy="10.6" r="4" fill="#fbf5d8"/><text x="8.7" y="12.9" font-size="6.4" font-weight="bold" text-anchor="middle" fill="#e9a11c" font-family="Liberation Sans">$</text></svg>
<svg style="left:662.00px;top:576.50px;" width="17" height="18" viewBox="0 0 17 18"><ellipse cx="8.5" cy="4.8" rx="4.9" ry="4.3" fill="#559a46"/><ellipse cx="6.6" cy="4" rx="1.6" ry="1.9" fill="#79b765"/><ellipse cx="10.4" cy="4.2" rx="1.5" ry="1.8" fill="#6aab58"/><ellipse cx="4.2" cy="12.8" rx="4" ry="4.7" fill="#d2c535"/><ellipse cx="3.6" cy="11.6" rx="2" ry="2.2" fill="#e4d94e"/><ellipse cx="12.9" cy="13.2" rx="4.1" ry="4.4" fill="#2c78b8"/><ellipse cx="13.6" cy="12" rx="2" ry="1.8" fill="#4a9ad6"/><circle cx="8.7" cy="10.6" r="4" fill="#fbf5d8"/><text x="8.7" y="12.9" font-size="6.4" font-weight="bold" text-anchor="middle" fill="#e9a11c" font-family="Liberation Sans">$</text></svg>
<svg style="left:146.60px;top:578.00px;" width="16" height="16" viewBox="0 0 16 16"><circle cx="8" cy="8" r="6.2" fill="none" stroke="#e2474b" stroke-width="3.4"/><path d="M8 1.8a6.2 6.2 0 0 1 6.2 6.2" fill="none" stroke="#2c9c8e" stroke-width="3.4"/><path d="M8 14.2a6.2 6.2 0 0 1-6.2-6.2" fill="none" stroke="#2c9c8e" stroke-width="3.4"/><circle cx="8" cy="8" r="2.6" fill="#e9f3f3"/></svg>
<svg style="left:182.50px;top:579.50px;" width="13" height="13" viewBox="0 0 13 13"><circle cx="6.5" cy="6.5" r="6.2" fill="#2f9be6"/><text x="6.5" y="8.2" font-size="4.2" text-anchor="middle" fill="#d4ecff" font-family="Liberation Sans" font-weight="bold">GPS</text></svg>
<svg style="left:215.20px;top:578.00px;" width="17" height="16" viewBox="0 0 17 16"><rect x="0" y="0" width="17" height="16" fill="#1d8a4a"/><text x="8.5" y="11.3" font-size="8.2" text-anchor="middle" fill="#eaf6ee" font-family="Liberation Sans" font-weight="bold" textLength="13" lengthAdjust="spacingAndGlyphs">FBS</text></svg>
<svg style="left:249.10px;top:578.00px;" width="17" height="16" viewBox="0 0 17 16"><rect x="0" y="0" width="17" height="16" fill="#121a7a"/><path d="M2.6 8.4l3-2.6 2.4 2 3.4-3.6 2.4 1.6" fill="none" stroke="#ffffff" stroke-width="1.3"/><path d="M2 10.5c3 3.6 10 3.6 13 0" fill="none" stroke="#8fb8ff" stroke-width="1.5"/></svg>
<svg style="left:283.50px;top:578.50px;" width="16" height="15" viewBox="0 0 16 15"><circle cx="5.6" cy="4.6" r="4" fill="#c9ced6"/><circle cx="4.6" cy="4.4" r="1.3" fill="#5a6372"/><rect x="6.2" y="5.6" width="8.4" height="6.2" rx="0.8" fill="#38a0ea" stroke="#d9e2ea" stroke-width="0.9"/><path d="M8 13.8h5" stroke="#d9e2ea" stroke-width="1.3"/><path d="M3 9.6c1 2 2 3 3.4 3.6" stroke="#c9ced6" stroke-width="1.2" fill="none"/></svg>
<svg style="left:317.40px;top:578.00px;" width="16" height="16" viewBox="0 0 16 16"><circle cx="7.6" cy="7.6" r="7" fill="#2ea3dd"/><path d="M3 7.4l8.6-3.4-1.5 7.6-2.6-2-1.3 1.3-0.3-2.3 4-3.6-5 3.1z" fill="#ffffff"/><rect x="8.6" y="9.6" width="7.4" height="6" rx="1.6" fill="#e2352f"/><text x="12.3" y="14.3" font-size="4.4" text-anchor="middle" fill="#fff" font-family="Liberation Sans" font-weight="bold">.07</text></svg>
<svg style="left:420.80px;top:577.80px;" width="17" height="16.4" viewBox="0 0 17 16.4"><rect x="0" y="0" width="17" height="16.4" rx="1.6" fill="#ffffff"/><text x="8.5" y="11.6" font-size="8.4" text-anchor="middle" fill="#d8232a" font-family="Liberation Sans" font-weight="bold" font-style="italic" textLength="13" lengthAdjust="spacingAndGlyphs">000</text><path d="M3.4 13.4h10.4" stroke="#d8232a" stroke-width="0.7"/></svg>
<svg style="left:455.00px;top:577.80px;" width="17.4" height="16.4" viewBox="0 0 17.4 16.4"><rect x="0" y="0" width="17.4" height="16.4" fill="#fbd914"/><path d="M3.6 8.3h10.4" stroke="#a48a00" stroke-width="1" stroke-dasharray="1.3 0.5"/></svg>
<svg style="left:490.00px;top:579.00px;" width="16.4" height="14" viewBox="0 0 16.4 14"><path d="M0.4 1.4h5.4l1.2 1.4h9v10.4h-15.6z" fill="#e9b43a"/><rect x="0.4" y="4" width="15.6" height="9.4" fill="#f7cf5c"/><rect x="3.4" y="6.8" width="9.6" height="6.6" fill="#4a9fe0"/><rect x="5.4" y="10.6" width="5.6" height="1.3" fill="#dbeeff"/></svg>
<svg style="left:524.30px;top:577.80px;" width="16.4" height="16.4" viewBox="0 0 16.4 16.4"><rect x="0" y="0" width="16.4" height="16.4" fill="#0c0c0c"/><path d="M2 6v-2M3.6 6v-3.2M5.2 6v-4" stroke="#fff" stroke-width="1"/><text x="11.2" y="6.6" font-size="6.6" text-anchor="middle" fill="#3ec043" font-family="Liberation Sans" font-weight="bold">IC</text><text x="8.2" y="10.4" font-size="3.2" text-anchor="middle" fill="#fff" font-family="Liberation Sans" font-weight="bold">Markets</text><text x="8.2" y="14.2" font-size="3.4" text-anchor="middle" fill="#3ec043" font-family="Liberation Sans" font-weight="bold">Global</text></svg>
<div style="left:551.50px;top:571.90px;width:33.00px;height:28.10px;background:rgba(255,255,255,0.16);"></div>
<svg style="left:559.20px;top:577.80px;" width="16.4" height="16.4" viewBox="0 0 16.4 16.4"><rect x="0" y="0" width="16.4" height="16.4" fill="#1672b8"/><text x="8.2" y="9" font-size="9" text-anchor="middle" fill="#fff" font-family="Liberation Sans" font-weight="bold" textLength="13" lengthAdjust="spacingAndGlyphs">FX</text><rect x="0" y="11" width="16.4" height="5.4" fill="#2a8ad2"/><path d="M2.4 13.6h11.6" stroke="#bfe0f8" stroke-width="0.9" stroke-dasharray="1.2 0.5"/></svg>
<svg style="left:627.30px;top:577.80px;" width="17.4" height="16.4" viewBox="0 0 17.4 16.4"><rect x="0" y="0" width="17.4" height="16.4" fill="#1d4f9a"/><path d="M4.4 13v-9.4h6.6a1.6 1.6 0 0 1 1.6 1.6v2a1.6 1.6 0 0 1-1.6 1.6h-4M8 11h4.6" fill="none" stroke="#fff" stroke-width="1.9"/></svg>
<svg style="left:697.50px;top:578.00px;" width="16" height="16" viewBox="0 0 16 16"><circle cx="8" cy="8" r="7.4" fill="#e94235"/><path d="M8 8L1.7 4.1A7.4 7.4 0 0 0 7.2 15.36z" fill="#35a853"/><path d="M8 8l-0.8 7.36A7.4 7.4 0 0 0 14.6 4.6z" fill="#fbbc05"/><path d="M8 8L1.7 4.1A7.4 7.4 0 0 1 14.6 4.6z" fill="#e94235"/><circle cx="8" cy="8" r="3.6" fill="#fff"/><circle cx="8" cy="8" r="2.8" fill="#4285f4"/><circle cx="11.8" cy="11.8" r="3.4" fill="#d86cc0" stroke="#f3c7ea" stroke-width="0.6"/></svg>
<svg style="left:731.60px;top:578.00px;" width="16" height="16" viewBox="0 0 16 16"><circle cx="8" cy="8" r="7.4" fill="#e94235"/><path d="M8 8L1.7 4.1A7.4 7.4 0 0 0 7.2 15.36z" fill="#35a853"/><path d="M8 8l-0.8 7.36A7.4 7.4 0 0 0 14.6 4.6z" fill="#fbbc05"/><path d="M8 8L1.7 4.1A7.4 7.4 0 0 1 14.6 4.6z" fill="#e94235"/><circle cx="8" cy="8" r="3.6" fill="#fff"/><circle cx="8" cy="8" r="2.8" fill="#4285f4"/></svg>
<svg style="left:767.80px;top:578.00px;" width="12.4" height="16" viewBox="0 0 12.4 16"><path d="M0.5 0.5h8l3.4 3.4v11.6h-11.4z" fill="#f4f4f4"/><path d="M8.5 0.5v3.4h3.4z" fill="#cfcfcf"/></svg>
<svg style="left:801.60px;top:578.00px;" width="14" height="16" viewBox="0 0 14 16"><path d="M3.4 0.8l9.4 1.4-2.2 11.6-9.6-1.6z" fill="#9fd0d8"/><path d="M4.4 1.6l7.4 1.1-1.7 9.5-7.6-1.3z" fill="#d9eef2"/><path d="M1 12.2l9.6 1.6-0.6 1.6-9.4-1.6z" fill="#5f8ea0"/></svg>
<div style="left:209.50px;top:598.30px;width:28.50px;height:1.70px;background:#76b9ed;"></div>
<div style="left:277.00px;top:598.30px;width:30.00px;height:1.70px;background:#76b9ed;"></div>
<div style="left:312.00px;top:598.30px;width:29.00px;height:1.70px;background:#76b9ed;"></div>
<div style="left:485.00px;top:598.30px;width:28.00px;height:1.70px;background:#76b9ed;"></div>
<div style="left:517.50px;top:598.30px;width:30.50px;height:1.70px;background:#76b9ed;"></div>
<div style="left:551.50px;top:598.30px;width:33.00px;height:1.70px;background:#76b9ed;"></div>
<div style="left:691.50px;top:598.30px;width:28.50px;height:1.70px;background:#76b9ed;"></div>
<div style="left:726.00px;top:598.30px;width:28.50px;height:1.70px;background:#76b9ed;"></div>
<div style="left:760.50px;top:598.30px;width:28.50px;height:1.70px;background:#76b9ed;"></div>
<div style="left:795.00px;top:598.30px;width:28.50px;height:1.70px;background:#76b9ed;"></div>
<svg style="left:884.60px;top:583.20px;" width="9" height="6" viewBox="0 0 9 6"><path d="M0.6 5l3.9-4 3.9 4" fill="none" stroke="#f2f2f2" stroke-width="1.1"/></svg>
<svg style="left:899.60px;top:581.20px;" width="13" height="11" viewBox="0 0 13 11"><rect x="3" y="0.6" width="9" height="6.4" fill="none" stroke="#f2f2f2" stroke-width="0.9"/><path d="M5.4 9.8h4.2M7.5 7v2.8" stroke="#f2f2f2" stroke-width="0.9"/><path d="M0.6 0.4v3.4h2.4" fill="none" stroke="#f2f2f2" stroke-width="0.9"/></svg>
<svg style="left:919.00px;top:580.40px;" width="13" height="12" viewBox="0 0 13 12"><path d="M7.2 3.4c0.6-2.6 4-2.6 3.4 0.2c-0.6 2.4-3.4 3-5.4 4.4c-1.8 1.2-3.6 0.6-3.2-1.2c0.4-1.6 2.6-1.8 3.4-0.4c0.8 1.4 0 3.4-1.4 4.6" fill="none" stroke="#f2f2f2" stroke-width="1.1"/><path d="M6.2 9.6l3.4-5.6" stroke="#f2f2f2" stroke-width="1"/></svg>
<svg style="left:938.80px;top:581.40px;" width="17" height="10.4" viewBox="0 0 17 10.4"><rect x="0.5" y="0.5" width="15.8" height="9.2" rx="0.8" fill="none" stroke="#f2f2f2" stroke-width="0.9"/><path d="M2.4 3h11.8M2.4 5h11.8" stroke="#f2f2f2" stroke-width="0.8" stroke-dasharray="1 0.9"/><path d="M4.4 7.4h8" stroke="#f2f2f2" stroke-width="0.8"/></svg>
<span class="t" style="top:579.30px;font-size:8.4px;color:#f2f2f2;left:963.90px;transform-origin:0 50%;transform:scaleX(0.8372);">ENG</span>
<span class="t" style="top:573.20px;font-size:8.4px;color:#f2f2f2;left:1006.80px;transform-origin:50% 50%;transform:translateX(-50%) scaleX(0.9230);">4:52 PM</span>
<span class="t" style="top:585.40px;font-size:8.4px;color:#f2f2f2;left:1007.10px;transform-origin:50% 50%;transform:translateX(-50%) scaleX(1.0197);">3/25/2026</span>
<svg style="left:1038.00px;top:580.00px;" width="18" height="17" viewBox="0 0 18 17"><path d="M0.6 0.6h10.6v7.6h-6.4l-2.2 2.4v-2.4h-2z" fill="#f2f2f2"/><path d="M2.4 2.7h7M2.4 4.6h7" stroke="#1a2738" stroke-width="0.7"/><circle cx="11.4" cy="11" r="4.9" fill="#2a2f3f" stroke="#c9ccd2" stroke-width="0.9"/><text x="11.4" y="13.4" font-size="6.6" text-anchor="middle" fill="#f2f2f2" font-family="Liberation Sans">1</text></svg>
</body></html>
